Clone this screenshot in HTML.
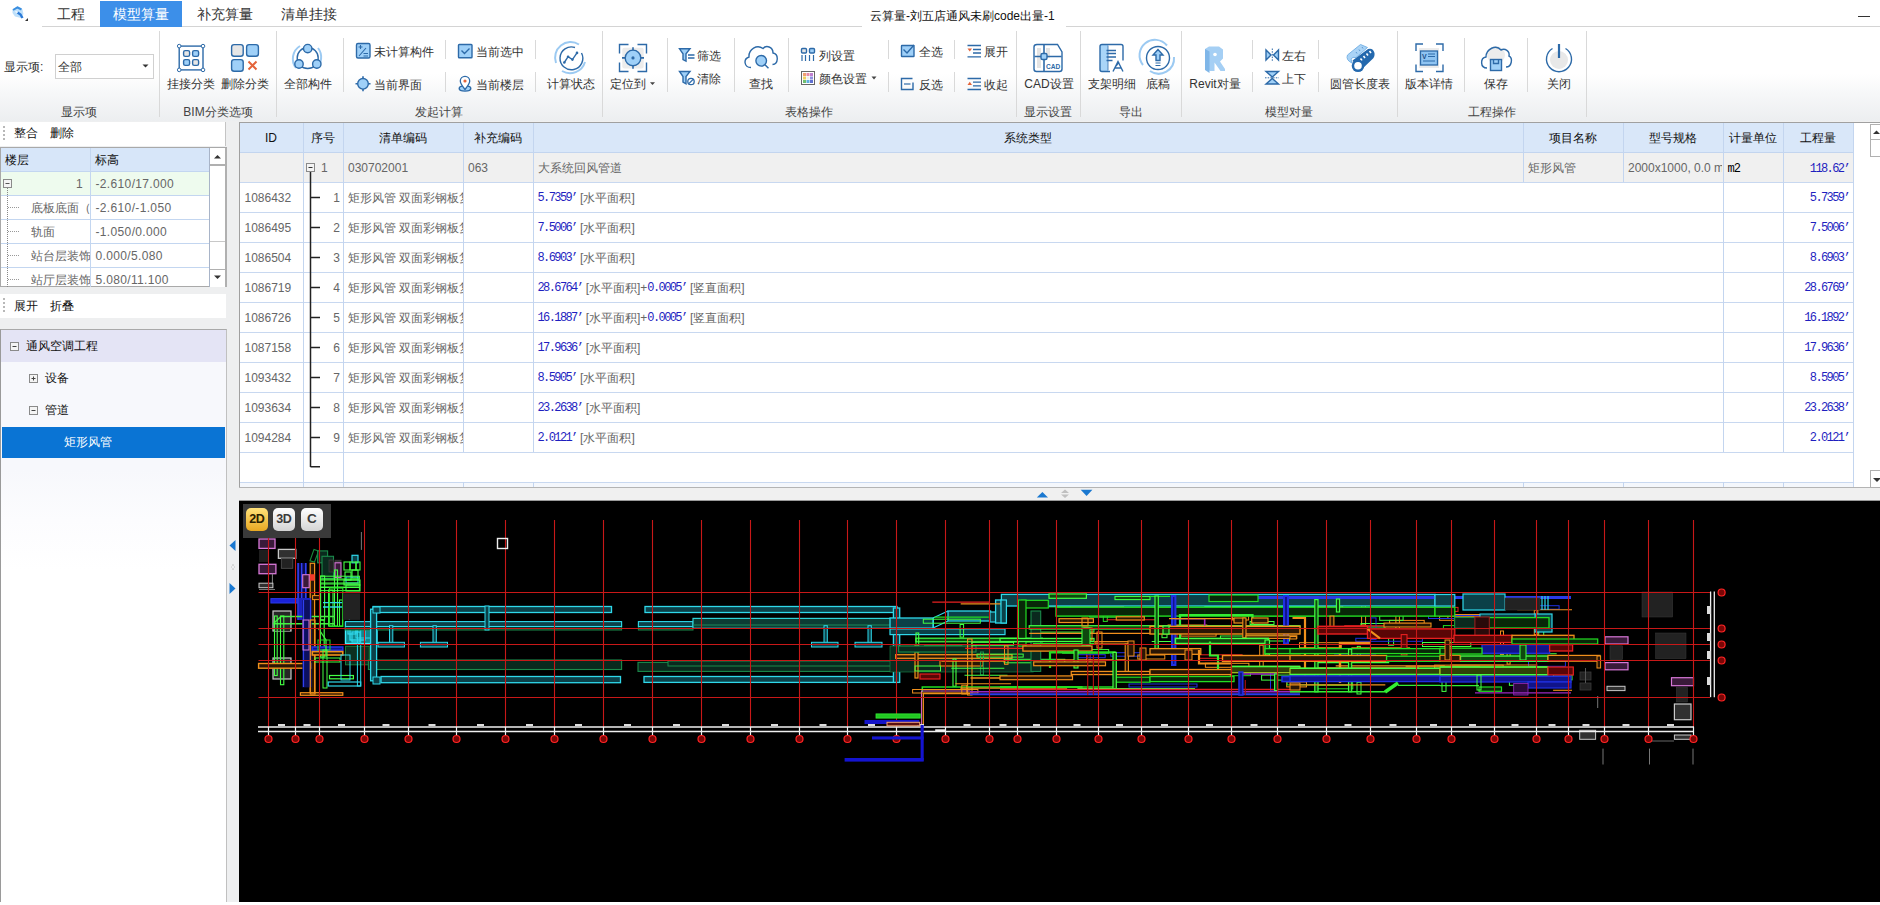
<!DOCTYPE html>
<html><head><meta charset="utf-8">
<style>
*{box-sizing:border-box}
html,body{margin:0;padding:0;width:1880px;height:905px;overflow:hidden;background:#f0f0f0;font-family:"Liberation Sans",sans-serif;color:#333}
.a{position:absolute}
.t{position:absolute;white-space:nowrap;line-height:1}
.sep{position:absolute;width:1px;background:#d9d9d9}
.lbl{font-size:12px;color:#444}
.btn{font-size:12px;color:#333}
</style></head><body>
<div class="a" style="left:0;top:0;width:1880px;height:27px;background:#fff"></div>
<div class="a" style="left:0;top:27px;width:1880px;height:94px;background:linear-gradient(#fff 0%,#fff 50%,#f6f7f8 72%,#eceef0 100%)"></div>
<div class="a" style="left:42px;top:26px;width:1838px;height:1px;background:#d4d4d4"></div>
<div class="a" style="left:100px;top:1px;width:82px;height:26px;background:#3c8fe9"></div>
<div class="t" style="left:57px;top:7px;font-size:14px;color:#333">工程</div>
<div class="t" style="left:113px;top:7px;font-size:14px;color:#fff">模型算量</div>
<div class="t" style="left:197px;top:7px;font-size:14px;color:#333">补充算量</div>
<div class="t" style="left:281px;top:7px;font-size:14px;color:#333">清单挂接</div>
<div class="a" style="left:862px;top:26px;width:204px;height:1px;background:#fff"></div>
<div class="t" style="left:870px;top:9.5px;font-size:12px;color:#111">云算量-刘五店通风未刷code出量-1</div>
<div class="a" style="left:1858px;top:16px;width:12px;height:1px;background:#333"></div>
<div class="a" style="left:55px;top:54px;width:99px;height:25px;background:#fff;border:1px solid #d0d0d0"></div>
<div class="t btn" style="left:58px;top:61px">全部</div>

<div class="sep" style="left:159px;top:31px;height:86px"></div>
<div class="sep" style="left:276px;top:31px;height:86px"></div>
<div class="sep" style="left:602px;top:31px;height:86px"></div>
<div class="sep" style="left:1016px;top:31px;height:86px"></div>
<div class="sep" style="left:1080px;top:31px;height:86px"></div>
<div class="sep" style="left:1181px;top:31px;height:86px"></div>
<div class="sep" style="left:1397px;top:31px;height:86px"></div>
<div class="sep" style="left:1586px;top:31px;height:86px"></div>
<div class="sep" style="left:343px;top:38px;height:54px"></div>
<div class="sep" style="left:667px;top:38px;height:54px"></div>
<div class="sep" style="left:734px;top:38px;height:54px"></div>
<div class="sep" style="left:788px;top:38px;height:54px"></div>
<div class="sep" style="left:1464px;top:38px;height:54px"></div>
<div class="sep" style="left:1527px;top:38px;height:54px"></div>
<div class="sep" style="left:445px;top:40px;height:19px"></div>
<div class="sep" style="left:445px;top:72px;height:20px"></div>
<div class="sep" style="left:535px;top:40px;height:19px"></div>
<div class="sep" style="left:535px;top:72px;height:20px"></div>
<div class="sep" style="left:888px;top:40px;height:19px"></div>
<div class="sep" style="left:888px;top:72px;height:20px"></div>
<div class="sep" style="left:954px;top:40px;height:19px"></div>
<div class="sep" style="left:954px;top:72px;height:20px"></div>
<div class="sep" style="left:1252px;top:40px;height:19px"></div>
<div class="sep" style="left:1252px;top:72px;height:20px"></div>
<div class="sep" style="left:1318px;top:40px;height:19px"></div>
<div class="sep" style="left:1318px;top:72px;height:20px"></div>
<div class="t lbl" style="left:19px;width:120px;text-align:center;top:106px;">显示项</div>
<div class="t lbl" style="left:158px;width:120px;text-align:center;top:106px;">BIM分类选项</div>
<div class="t lbl" style="left:379px;width:120px;text-align:center;top:106px;">发起计算</div>
<div class="t lbl" style="left:749px;width:120px;text-align:center;top:106px;">表格操作</div>
<div class="t lbl" style="left:988px;width:120px;text-align:center;top:106px;">显示设置</div>
<div class="t lbl" style="left:1071px;width:120px;text-align:center;top:106px;">导出</div>
<div class="t lbl" style="left:1229px;width:120px;text-align:center;top:106px;">模型对量</div>
<div class="t lbl" style="left:1432px;width:120px;text-align:center;top:106px;">工程操作</div>
<div class="t btn" style="left:130.5px;width:120px;text-align:center;top:78px;">挂接分类</div>
<div class="t btn" style="left:185px;width:120px;text-align:center;top:78px;">删除分类</div>
<div class="t btn" style="left:248px;width:120px;text-align:center;top:78px;">全部构件</div>
<div class="t btn" style="left:511px;width:120px;text-align:center;top:78px;">计算状态</div>
<div class="t btn" style="left:568px;width:120px;text-align:center;top:78px;">定位到</div>
<div class="t btn" style="left:700.5px;width:120px;text-align:center;top:78px;">查找</div>
<div class="t btn" style="left:989px;width:120px;text-align:center;top:78px;">CAD设置</div>
<div class="t btn" style="left:1052px;width:120px;text-align:center;top:78px;">支架明细</div>
<div class="t btn" style="left:1098px;width:120px;text-align:center;top:78px;">底稿</div>
<div class="t btn" style="left:1155px;width:120px;text-align:center;top:78px;">Revit对量</div>
<div class="t btn" style="left:1300px;width:120px;text-align:center;top:78px;">圆管长度表</div>
<div class="t btn" style="left:1369px;width:120px;text-align:center;top:78px;">版本详情</div>
<div class="t btn" style="left:1436px;width:120px;text-align:center;top:78px;">保存</div>
<div class="t btn" style="left:1499px;width:120px;text-align:center;top:78px;">关闭</div>
<div class="t btn" style="left:374px;top:46px;">未计算构件</div>
<div class="t btn" style="left:374px;top:79px;">当前界面</div>
<div class="t btn" style="left:476px;top:46px;">当前选中</div>
<div class="t btn" style="left:476px;top:79px;">当前楼层</div>
<div class="t btn" style="left:697px;top:50px;">筛选</div>
<div class="t btn" style="left:697px;top:73px;">清除</div>
<div class="t btn" style="left:819px;top:50px;">列设置</div>
<div class="t btn" style="left:819px;top:73px;">颜色设置</div>
<div class="t btn" style="left:919px;top:46px;">全选</div>
<div class="t btn" style="left:919px;top:79px;">反选</div>
<div class="t btn" style="left:984px;top:46px;">展开</div>
<div class="t btn" style="left:984px;top:79px;">收起</div>
<div class="t btn" style="left:1282px;top:50px;">左右</div>
<div class="t btn" style="left:1282px;top:73px;">上下</div>
<div class="t btn" style="left:4px;top:61px;">显示项: </div>
<svg class="a" style="left:0;top:0" width="1880" height="121" viewBox="0 0 1880 121">
<defs><style>.s{fill:none;stroke:#2d6aa8;stroke-width:1.4}.f{fill:#9fd0f8;stroke:#2d6aa8;stroke-width:1.4}.g{fill:#e6e6e6;stroke:#2d6aa8;stroke-width:1.4}.lb{fill:none;stroke:#9ccaf2;stroke-width:2}</style></defs>
<!-- 挂接分类 -->
<rect class="s" x="179.2" y="46.1" width="23.8" height="23.8"/>
<circle cx="179.2" cy="46.1" r="1.8" fill="#fff" stroke="#2d6aa8" stroke-width="1"/><circle cx="203" cy="46.1" r="1.8" fill="#fff" stroke="#2d6aa8" stroke-width="1"/><circle cx="179.2" cy="69.9" r="1.8" fill="#fff" stroke="#2d6aa8" stroke-width="1"/><circle cx="203" cy="69.9" r="1.8" fill="#fff" stroke="#2d6aa8" stroke-width="1"/>
<rect class="g" x="183.6" y="50.6" width="6" height="5.8" rx="1.6"/><rect class="f" x="192.6" y="50.6" width="6" height="5.8" rx="1.6"/><rect class="f" x="183.6" y="59.6" width="6" height="5.8" rx="1.6"/><rect class="g" x="192.6" y="59.6" width="6" height="5.8" rx="1.6"/>
<!-- 删除分类 -->
<rect class="g" x="231.6" y="44.6" width="11.6" height="11.6" rx="2.5"/><rect class="f" x="246.6" y="44.6" width="11.8" height="11.6" rx="2.5"/><rect class="f" x="231.6" y="59.6" width="11.6" height="11.6" rx="2.5"/>
<path d="M248.5 61.5 L256.5 69.5 M256.5 61.5 L248.5 69.5" stroke="#e4643a" stroke-width="2"/>
<!-- 全部构件 -->
<path class="lb" d="M296 68 A15 15 0 0 1 300 46 M318 48 A15 15 0 0 1 316 68.5" />
<circle class="s" cx="307.7" cy="58" r="10.5"/>
<circle class="f" cx="307.7" cy="48.6" r="4.2"/><circle class="f" cx="299" cy="64" r="4.2"/><circle class="f" cx="316.8" cy="64" r="4.2"/>
<!-- 未计算构件 small -->
<rect class="f" x="356.5" y="43.5" width="13.5" height="14.5" rx="1.5"/>
<path d="M358.5 47h4M360.5 45v4M359 56l7-8M363.5 53.5h4.5M363.5 56h4.5" stroke="#2d6aa8" stroke-width="1.1" fill="none"/>
<!-- 当前界面 -->
<circle class="f" cx="363" cy="83.8" r="5.3"/>
<path d="M363 76.3v2.3M363 89v2.3M355.5 83.8h2.3M368.2 83.8h2.3" stroke="#2d6aa8" stroke-width="1.6"/>
<!-- 当前选中 -->
<rect class="f" x="458.5" y="44.5" width="13.5" height="13.3" rx="0.8"/>
<path d="M461.5 50.5l3 3 5-5" class="s"/>
<!-- 当前楼层 -->
<ellipse class="f" cx="465" cy="88.5" rx="5.8" ry="2.6"/>
<path d="M465 89.5 C461 84.5 460.3 82.5 460.3 81 A4.7 4.7 0 0 1 469.7 81 C469.7 82.5 469 84.5 465 89.5Z" fill="#fff" stroke="#2d6aa8" stroke-width="1.3"/>
<circle cx="465" cy="81" r="1.6" fill="#e4643a"/>
<!-- 计算状态 -->
<path class="lb" d="M556 63 A15.6 15.6 0 0 1 579 44.5 M585 62 A15.6 15.6 0 0 1 562 71" stroke-width="2.2"/>
<path d="M575 47.5 A11.4 11.4 0 1 0 581.5 53" class="s" stroke-width="1.5"/>
<path d="M564.3 62.5 L568.1 56.7 L572.4 59.6 L577 52.9" class="s" stroke-width="1.4"/>
<circle cx="564.3" cy="62.5" r="1.3" fill="#2d6aa8"/><circle cx="568.1" cy="56.7" r="1.3" fill="#2d6aa8"/><circle cx="572.4" cy="59.6" r="1.3" fill="#2d6aa8"/><circle cx="577" cy="52.9" r="1.3" fill="#2d6aa8"/>
<!-- 定位到 -->
<rect x="622.3" y="47.8" width="21.4" height="20.7" fill="#ececec" rx="2"/>
<path d="M619.5 53.5v-9h9M637.5 44.5h9v9M646.5 62.5v9h-9M628.5 71.5h-9v-9" class="s" stroke-width="1.5"/>
<circle class="f" cx="633" cy="57.9" r="7.8" stroke-width="1.6"/>
<circle cx="633" cy="57.9" r="1.6" fill="#2d6aa8"/>
<path d="M633 47.2v3M633 65.8v3M622 57.9h3M641 57.9h3" stroke="#2d6aa8" stroke-width="1.6"/>
<!-- 筛选 -->
<path d="M679.5 48.8h10.5l-4 5v7.3l-3 -1.6v-5.7z" class="f" stroke-width="1.2"/>
<path d="M688 55h6.5M688 58h6.5" stroke="#2d6aa8" stroke-width="1.3"/>
<!-- 清除 -->
<path d="M679.5 71.5h10.5l-4 5v7.3l-3 -1.6v-5.7z" class="f" stroke-width="1.2"/>
<circle cx="691" cy="81.5" r="3.2" fill="#fff" stroke="#2d6aa8" stroke-width="1.3"/><path d="M689 83.5l4-4" stroke="#2d6aa8" stroke-width="1.1"/>
<!-- 查找 -->
<path d="M751 67.5 C744 67.5 743 59 749 57 C748.5 49 757 44 763 48.5 C766 45 773 46.5 773 53 C779 54 778.5 64 772.5 64.5" class="s" stroke-width="1.5"/>
<circle class="f" cx="761.2" cy="60.8" r="5.3" stroke-width="1.5"/>
<path d="M765 64.8l3.5 3.5" stroke="#2d6aa8" stroke-width="1.5"/>
<!-- 列设置 -->
<rect class="g" x="801.5" y="48.5" width="5" height="4.5" rx="1" stroke-width="1"/><rect class="f" x="809.5" y="48.5" width="5" height="4.5" rx="1" stroke-width="1"/>
<path d="M802 55v6M805.5 55v6M809.5 55v6M813.5 55v6" stroke="#2d6aa8" stroke-width="1.2"/>
<!-- 颜色设置 -->
<rect x="801.5" y="71.5" width="13" height="13" fill="#fff" stroke="#666" stroke-width="1"/>
<rect x="803" y="73" width="3" height="3" fill="#f1a070"/><rect x="806.5" y="73" width="3" height="3" fill="#e88aa8"/><rect x="810" y="73" width="3" height="3" fill="#c080d0"/>
<rect x="803" y="76.5" width="3" height="3" fill="#f0d060"/><rect x="806.5" y="76.5" width="3" height="3" fill="#eee"/><rect x="810" y="76.5" width="3" height="3" fill="#9090e0"/>
<rect x="803" y="80" width="3" height="3" fill="#70c070"/><rect x="806.5" y="80" width="3" height="3" fill="#60b0e0"/><rect x="810" y="80" width="3" height="3" fill="#6070d0"/>
<path d="M871.5 76.5h5l-2.5 3z" fill="#444"/>
<path d="M650 82.3h5l-2.5 2.8z" fill="#444"/>
<path d="M142.5 64.5h6l-3 3z" fill="#333"/>
<!-- 全选 -->
<rect class="f" x="901.5" y="45.5" width="12.5" height="11" rx="0.5" stroke-width="1.3" />
<path d="M903.5 49.5l3.5 3.5 7-8" class="s" stroke-width="1.4"/>
<!-- 反选 -->
<path d="M912.5 78.5h-11v11h11.5v-7" class="s" stroke-width="1.3"/><path d="M904 84h6.5" stroke="#2d6aa8" stroke-width="1.2"/>
<!-- 展开 -->
<path d="M967.5 45.5h13.5M973 49.5h8M973 53h8M967.5 56.8h13.5" stroke="#2d6aa8" stroke-width="1.3"/>
<path d="M967.5 48.5h4.5l-2.25 3z" fill="#e4643a"/>
<!-- 收起 -->
<path d="M967.5 78.5h13.5M973 82.2h8M973 85.8h8M967.5 89.5h13.5" stroke="#2d6aa8" stroke-width="1.3"/>
<path d="M967.5 85h4.5l-2.25 -3.2z" fill="#e4643a"/>
<!-- CAD -->
<rect x="1037" y="48" width="4" height="20" fill="#e4e4e4"/><rect x="1046" y="48" width="4" height="10" fill="#e4e4e4"/>
<path d="M1037 44.5h20.5l4.5 7.5v17q0 2.5 -2.5 2.5h-23q-2.5 0 -2.5 -2.5v-22q0 -2.5 3 -2.5z" class="s" stroke-width="1.6"/>
<path d="M1034.5 56.5h27M1044 44.5v27" stroke="#2d6aa8" stroke-width="1.6"/>
<rect class="f" x="1041" y="53.5" width="6" height="6" rx="1.5" stroke-width="1.4"/>
<text x="1046" y="68.5" font-family="Liberation Sans" font-weight="bold" font-size="6.6" fill="#2d6aa8">CAD</text>
<!-- 支架明细 -->
<path d="M1108 44.5h-6q-2 0 -2 2v23q0 2 2 2h6z" fill="#a9d5f8"/>
<path d="M1110 71.5h-8q-2 0 -2-2v-23q0-2 2-2h19q2 0 2 2v14" class="s" stroke-width="1.5"/>
<path d="M1108 45.5v25" stroke="#2d6aa8" stroke-width="0.8"/>
<path d="M1106.5 50.5h9.5M1106.5 53.5h9.5M1106.5 57h9.5M1106.5 60.5h6" stroke="#2d6aa8" stroke-width="1.3"/>
<path d="M1113 71.5l5-10l5 10M1114.5 68h7M1116 66l3-4" class="s" stroke-width="1.5"/>
<!-- 底稿 -->
<path class="lb" d="M1143 65 A15.4 15.4 0 0 1 1167 45.5 M1174 57 A15.4 15.4 0 0 1 1150 71" stroke-width="2"/>
<circle class="s" cx="1158" cy="58" r="11.5" stroke-width="1.5"/>
<path d="M1158 49.5l-5 5.5h3v5.5h4v-5.5h3z" class="f" stroke-width="1.3"/>
<path d="M1155.5 63h5M1155.5 65.5h5" stroke="#2d6aa8" stroke-width="1.2"/>
<!-- Revit -->
<path d="M1205 49l4-2.5h10l4 3v9l-3 3 5 7.5v2h-4.5l-6-8.5v8.5h-4.5l-5-3z" fill="#a5cff4"/>
<path d="M1205 49l4.5 2.5v21.5l-4.5-3z" fill="#7fb6e8"/>
<circle cx="1215" cy="54.5" r="1.8" fill="#fff"/>
<!-- 左右 -->
<path d="M1266 50v10l5-5z" class="f" stroke-width="1.2"/><path d="M1278.5 50v10l-5-5z" class="f" stroke-width="1.2"/>
<path d="M1272.3 48.5v13" stroke="#2d6aa8" stroke-width="1" stroke-dasharray="1.5 1.2"/>
<!-- 上下 -->
<path d="M1266 71.5h12.5l-6.25 5.5z" class="f" stroke-width="1.2"/><path d="M1266 84h12.5l-6.25 -5.5z" class="f" stroke-width="1.2"/>
<path d="M1265 77.8h14" stroke="#2d6aa8" stroke-width="1" stroke-dasharray="1.5 1.2"/>
<!-- 圆管长度表 -->
<path d="M1352 63 Q1345.5 60 1347.5 55 L1360.5 44.5 L1367.5 47.5 L1356 57.5 Q1352.5 56.5 1351 59z" fill="#a9d3f6" stroke="#7ab4e6" stroke-width="1"/>
<path d="M1352.5 60.5 L1368 49 Q1373 47.5 1374.5 53 Q1375 57 1372 59.5 L1361 70z" fill="#2469ae"/>
<path d="M1360.5 58.5l1.5 2M1363.5 56l1.5 2M1366.5 53.5l1.5 2M1369.5 51l1.5 2" stroke="#fff" stroke-width="1.6"/>
<path d="M1356 52l1 1.5M1359 49.5l1 1.5M1362 47l1 1.5" stroke="#5a96d0" stroke-width="1"/>
<circle cx="1358" cy="65.8" r="6.3" fill="#2469ae"/><circle cx="1358" cy="65.8" r="3.8" fill="#fff"/>
<!-- 版本详情 -->
<rect x="1419" y="48" width="20" height="20" fill="#ececec"/>
<path d="M1416 51v-7h7M1436 44h7v7M1443 64.5v7h-7M1423 71.5h-7v-7" class="s" stroke-width="1.5"/>
<rect x="1420.5" y="51" width="17" height="14" fill="#8fc4f2" stroke="#2d6aa8" stroke-width="1.3"/>
<text x="1422" y="58.5" font-family="Liberation Sans" font-size="7" font-weight="bold" fill="#1d4f8a">V</text>
<path d="M1428 54h7M1428 56.5h7M1423 61h12" stroke="#2d6aa8" stroke-width="1"/>
<!-- 保存 -->
<circle cx="1496" cy="55" r="9" fill="#ececec"/>
<path d="M1487 68 C1480 68 1480 58 1486 57 C1486 49 1496 44 1501 50 C1505 48 1510 51 1509 56 C1513 58 1512 67 1506 67" class="s" stroke-width="1.4"/>
<rect class="f" x="1490.5" y="59.5" width="11" height="11" stroke-width="1.3"/>
<path d="M1493.5 59.5v4h5v-4" class="s" stroke-width="1.2"/>
<!-- 关闭 -->
<circle cx="1559" cy="60" r="9" fill="#e8e8e8"/>
<path d="M1552.5 48.5 A12.5 12.5 0 1 0 1565.5 48.5" class="s" stroke-width="2.2"/>
<path d="M1559 44v14" stroke="#2d6aa8" stroke-width="2.2"/>
<!-- logo -->
<path d="M12.5 9.5L17.5 6L22.5 9.5L23.5 14L21 18L15 16.5L12.5 13z" fill="#bfe0fa"/>
<path d="M13 10L17.5 7.5L21.5 9.5" stroke="#3a8ee0" stroke-width="2" fill="none"/>
<path d="M17.5 12.5L20.5 14.5L22.5 18" stroke="#2a7ad8" stroke-width="2.4" fill="none"/>
<path d="M15.5 11.5l2 1" stroke="#fff" stroke-width="1.2"/>
<path d="M25 21h3v-3z" fill="#333"/>
</svg>

<!-- left panel -->
<div class="a" style="left:0;top:121px;width:240px;height:784px;background:#eeeff0"></div>
<div class="a" style="left:0;top:121.5px;width:226px;height:24.5px;background:#fff;border-right:1px solid #c4c4c4"></div>
<div class="a" style="left:3px;top:126px;width:2px;height:14px;background:repeating-linear-gradient(#b8b8b8 0 2px,transparent 2px 4px)"></div>
<div class="t" style="left:14px;top:127px;font-size:12px;color:#111">整合</div>
<div class="t" style="left:50px;top:127px;font-size:12px;color:#111">删除</div>
<!-- floor table -->
<div class="a" style="left:0;top:147px;width:227px;height:140px;background:#fff;border:1px solid #a9a9a9"></div>
<div class="a" style="left:1px;top:148px;width:208px;height:23.5px;background:#d7e6f9;border-bottom:1px solid #c3d6f0"></div>
<div class="a" style="left:90px;top:148px;width:1px;height:139px;background:#c3d6f0"></div>
<div class="t" style="left:5px;top:153.5px;font-size:12px;color:#111">楼层</div>
<div class="t" style="left:95px;top:153.5px;font-size:12px;color:#111">标高</div>
<div class="a" style="left:1px;top:172px;width:208px;height:23.5px;background:#eefbee;border-bottom:1px solid #c3d6f0"></div>
<div class="a" style="left:1px;top:219px;width:208px;height:1px;background:#c3d6f0"></div>
<div class="a" style="left:1px;top:243px;width:208px;height:1px;background:#c3d6f0"></div>
<div class="a" style="left:1px;top:267px;width:208px;height:1px;background:#c3d6f0"></div>
<div class="a" style="left:90px;top:148px;width:1px;height:139px;background:#c3d6f0"></div>
<!-- scrollbar -->
<div class="a" style="left:209px;top:148px;width:1px;height:139px;background:#a8b4c8"></div>
<div class="a" style="left:210px;top:148px;width:16px;height:139px;background:#fff"></div>
<div class="a" style="left:210px;top:164px;width:16px;height:2px;background:#b0b0b0"></div>
<div class="a" style="left:210px;top:241px;width:16px;height:1px;background:#c8c8c8"></div>
<div class="a" style="left:210px;top:269px;width:16px;height:1px;background:#b0b0b0"></div>
<div class="a" style="left:225px;top:148px;width:2px;height:139px;background:#b0b0b0"></div>
<svg class="a" style="left:0;top:140px" width="240" height="160">
<path d="M214 18.5h7l-3.5-3.5z" fill="#333"/>
<path d="M214 135.5h7l-3.5 3.5z" fill="#333"/>
<rect x="3.5" y="39.5" width="8" height="8" fill="#f4f4f4" stroke="#8a8a8a" stroke-width="1"/>
<path d="M5.5 43.5h4" stroke="#555" stroke-width="1"/>
<path d="M7.5 48v99" stroke="#888" stroke-width="1" stroke-dasharray="1 1"/>
<path d="M8 67.5h11M8 91.5h11M8 115.5h11M8 139.5h11" stroke="#999" stroke-width="1" stroke-dasharray="1 1"/>
</svg>
<div class="t" style="left:76px;top:177.5px;font-size:12px;color:#666">1</div>
<div class="t" style="left:95.5px;top:177.5px;font-size:12px;color:#666;letter-spacing:0.35px">-2.610/17.000</div>
<div class="a" style="left:31px;top:196px;width:59px;height:90px;overflow:hidden">
<div class="t" style="left:0;top:5.5px;font-size:12px;color:#666">底板底面（底板）</div>
<div class="t" style="left:0;top:29.5px;font-size:12px;color:#666">轨面</div>
<div class="t" style="left:0;top:53.5px;font-size:12px;color:#666">站台层装饰面</div>
<div class="t" style="left:0;top:77.5px;font-size:12px;color:#666">站厅层装饰面</div>
</div>
<div class="t" style="left:95.5px;top:201.5px;font-size:12px;color:#666;letter-spacing:0.35px">-2.610/-1.050</div>
<div class="t" style="left:95.5px;top:225.5px;font-size:12px;color:#666;letter-spacing:0.35px">-1.050/0.000</div>
<div class="t" style="left:95.5px;top:249.5px;font-size:12px;color:#666;letter-spacing:0.35px">0.000/5.080</div>
<div class="t" style="left:95.5px;top:273.5px;font-size:12px;color:#666;letter-spacing:0.35px">5.080/11.100</div>
<!-- toolbar 2 -->
<div class="a" style="left:0;top:293.5px;width:226px;height:24px;background:#fff"></div>
<div class="a" style="left:3px;top:298px;width:2px;height:14px;background:repeating-linear-gradient(#b8b8b8 0 2px,transparent 2px 4px)"></div>
<div class="t" style="left:14px;top:299.5px;font-size:12px;color:#111">展开</div>
<div class="t" style="left:50px;top:299.5px;font-size:12px;color:#111">折叠</div>
<!-- tree -->
<div class="a" style="left:0;top:328.5px;width:227px;height:577px;background:linear-gradient(#f7f8fc 0px,#f7f8fc 140px,#fcfcfe 190px,#fff 240px);border-left:1px solid #9a9a9a;border-top:1px solid #a9a9a9;border-right:1px solid #c0c0c0"></div>
<div class="a" style="left:1px;top:329.5px;width:224.5px;height:32.5px;background:#e4e4f5"></div>
<div class="a" style="left:2px;top:427px;width:223px;height:30.5px;background:#0a74d4"></div>
<svg class="a" style="left:0;top:330px" width="60" height="100">
<rect x="10.5" y="12.5" width="8" height="8" fill="#f4f4f4" stroke="#8a8a8a"/><path d="M12.5 16.5h4" stroke="#444"/>
<rect x="29.5" y="44.5" width="8" height="8" fill="#f4f4f4" stroke="#8a8a8a"/><path d="M31.5 48.5h4M33.5 46.5v4" stroke="#444"/>
<rect x="29.5" y="76.5" width="8" height="8" fill="#f4f4f4" stroke="#8a8a8a"/><path d="M31.5 80.5h4" stroke="#444"/>
</svg>
<div class="t" style="left:26px;top:340px;font-size:12px;color:#111">通风空调工程</div>
<div class="t" style="left:45px;top:372px;font-size:12px;color:#111">设备</div>
<div class="t" style="left:45px;top:404px;font-size:12px;color:#111">管道</div>
<div class="t" style="left:64px;top:436px;font-size:12px;color:#fff">矩形风管</div>
<!-- vertical splitter arrows -->
<svg class="a" style="left:226px;top:530px" width="14" height="70">
<path d="M3.5 15.5l6-5.5v11z" fill="#1a78d0"/>
<path d="M5 37l3-3v6z M9 37l-3-3v6z" fill="#c0c0c0"/>
<path d="M3.5 53v11l6-5.5z" fill="#1a78d0"/>
</svg>

<div class="a" style="left:239px;top:122px;width:1641px;height:366px;background:#fff"></div>
<div class="a" style="left:239px;top:122px;width:1641px;height:1px;background:#a0a0a0"></div>
<div class="a" style="left:239px;top:122px;width:1px;height:366px;background:#a0a0a0"></div>
<div class="a" style="left:240px;top:123px;width:1614px;height:29.5px;background:#d9e7f9"></div>
<div class="a" style="left:240px;top:152px;width:1614px;height:1px;background:#c3d5ef"></div>
<div class="a" style="left:240px;top:153px;width:1614px;height:29px;background:#f0f0f0"></div>
<div class="a" style="left:240px;top:182px;width:1614px;height:1px;background:#c8d8f0"></div>
<div class="a" style="left:240px;top:212px;width:1614px;height:1px;background:#c8d8f0"></div>
<div class="a" style="left:240px;top:242px;width:1614px;height:1px;background:#c8d8f0"></div>
<div class="a" style="left:240px;top:272px;width:1614px;height:1px;background:#c8d8f0"></div>
<div class="a" style="left:240px;top:302px;width:1614px;height:1px;background:#c8d8f0"></div>
<div class="a" style="left:240px;top:332px;width:1614px;height:1px;background:#c8d8f0"></div>
<div class="a" style="left:240px;top:362px;width:1614px;height:1px;background:#c8d8f0"></div>
<div class="a" style="left:240px;top:392px;width:1614px;height:1px;background:#c8d8f0"></div>
<div class="a" style="left:240px;top:422px;width:1614px;height:1px;background:#c8d8f0"></div>
<div class="a" style="left:240px;top:452px;width:1614px;height:1px;background:#c8d8f0"></div>
<div class="a" style="left:240px;top:482px;width:1614px;height:1px;background:#c8d8f0"></div>
<div class="a" style="left:240px;top:483px;width:1614px;height:4px;background:#f4f7fc"></div>
<div class="a" style="left:239px;top:487px;width:1641px;height:1px;background:#b4b4b4"></div>
<div class="a" style="left:1853px;top:123px;width:1px;height:364px;background:#c3d5ef"></div>
<div class="a" style="left:303px;top:123px;width:1px;height:364px;background:#c3d5ef"></div>
<div class="a" style="left:343px;top:123px;width:1px;height:364px;background:#c3d5ef"></div>
<div class="a" style="left:463px;top:123px;width:1px;height:329px;background:#c3d5ef"></div>
<div class="a" style="left:463px;top:482px;width:1px;height:5px;background:#c3d5ef"></div>
<div class="a" style="left:533px;top:123px;width:1px;height:329px;background:#c3d5ef"></div>
<div class="a" style="left:533px;top:482px;width:1px;height:5px;background:#c3d5ef"></div>
<div class="a" style="left:1523px;top:123px;width:1px;height:59px;background:#c3d5ef"></div>
<div class="a" style="left:1523px;top:482px;width:1px;height:5px;background:#c3d5ef"></div>
<div class="a" style="left:1623px;top:123px;width:1px;height:59px;background:#c3d5ef"></div>
<div class="a" style="left:1623px;top:482px;width:1px;height:5px;background:#c3d5ef"></div>
<div class="a" style="left:1723px;top:123px;width:1px;height:329px;background:#c3d5ef"></div>
<div class="a" style="left:1723px;top:482px;width:1px;height:5px;background:#c3d5ef"></div>
<div class="a" style="left:1783px;top:123px;width:1px;height:329px;background:#c3d5ef"></div>
<div class="a" style="left:1783px;top:482px;width:1px;height:5px;background:#c3d5ef"></div>
<div class="t" style="left:221px;width:100px;text-align:center;top:131.5px;font-size:12px;color:#111">ID</div>
<div class="t" style="left:273px;width:100px;text-align:center;top:131.5px;font-size:12px;color:#111">序号</div>
<div class="t" style="left:353px;width:100px;text-align:center;top:131.5px;font-size:12px;color:#111">清单编码</div>
<div class="t" style="left:448px;width:100px;text-align:center;top:131.5px;font-size:12px;color:#111">补充编码</div>
<div class="t" style="left:978px;width:100px;text-align:center;top:131.5px;font-size:12px;color:#111">系统类型</div>
<div class="t" style="left:1523px;width:100px;text-align:center;top:131.5px;font-size:12px;color:#111">项目名称</div>
<div class="t" style="left:1623px;width:100px;text-align:center;top:131.5px;font-size:12px;color:#111">型号规格</div>
<div class="t" style="left:1703px;width:100px;text-align:center;top:131.5px;font-size:12px;color:#111">计量单位</div>
<div class="t" style="left:1768px;width:100px;text-align:center;top:131.5px;font-size:12px;color:#111">工程量</div>
<svg class="a" style="left:300px;top:160px" width="20" height="310"><rect x="6.5" y="3.5" width="8" height="8" fill="#f4f4f4" stroke="#8a8a8a"/><path d="M8.5 7.5h4" stroke="#333"/><path d="M10.5 12v295" stroke="#222" stroke-width="1.5"/><path d="M10.5 37.5h13" stroke="#222" stroke-width="1.5"/><path d="M10.5 67.5h13" stroke="#222" stroke-width="1.5"/><path d="M10.5 97.5h13" stroke="#222" stroke-width="1.5"/><path d="M10.5 127.5h13" stroke="#222" stroke-width="1.5"/><path d="M10.5 157.5h13" stroke="#222" stroke-width="1.5"/><path d="M10.5 187.5h13" stroke="#222" stroke-width="1.5"/><path d="M10.5 217.5h13" stroke="#222" stroke-width="1.5"/><path d="M10.5 247.5h13" stroke="#222" stroke-width="1.5"/><path d="M10.5 277.5h13" stroke="#222" stroke-width="1.5"/><path d="M10.5 306.75h12.5" stroke="#222" stroke-width="1.5"/></svg>
<div class="t" style="left:321px;top:161.5px;font-size:12px;color:#666;line-height:12px;vertical-align:top">1</div>
<div class="t" style="left:348px;top:161.5px;font-size:12px;color:#666;line-height:12px;vertical-align:top">030702001</div>
<div class="t" style="left:468px;top:161.5px;font-size:12px;color:#666;line-height:12px;vertical-align:top">063</div>
<div class="t" style="left:537.5px;top:161.5px;font-size:12px;color:#666;line-height:12px;vertical-align:top">大系统回风管道</div>
<div class="t" style="left:1527.5px;top:161.5px;font-size:12px;color:#666;line-height:12px;vertical-align:top">矩形风管</div>
<div class="a" style="left:1624px;top:153px;width:98px;height:29px;overflow:hidden"><div class="t" style="left:4px;top:8.5px;font-size:12px;color:#666;line-height:12px;vertical-align:top">2000x1000, 0.0 mm</div></div>
<div class="t" style="left:1727.5px;top:162.5px;font-family:'Liberation Mono',monospace;font-size:12px;color:#000;letter-spacing:-1px;line-height:12px">m2</div>
<div class="t" style="left:1700px;width:149px;text-align:right;top:162.5px;font-family:'Liberation Mono',monospace;font-size:12px;letter-spacing:-1.6px;line-height:12px;vertical-align:top;color:#1f1fbf">118.62’</div>
<div class="t" style="left:244.5px;top:191.5px;font-size:12px;color:#666;line-height:12px;vertical-align:top">1086432</div>
<div class="t" style="left:300px;width:40px;text-align:right;top:191.5px;font-size:12px;color:#666;line-height:12px;vertical-align:top">1</div>
<div class="a" style="left:344px;top:182.5px;width:119px;height:29px;overflow:hidden"><div class="t" style="left:3.5px;top:9px;font-size:12px;color:#666;line-height:12px;vertical-align:top">矩形风管 双面彩钢板复合风管</div></div>
<div class="t" style="left:537.5px;top:191.5px;line-height:12px"><span style="font-family:'Liberation Mono',monospace;font-size:12px;letter-spacing:-1.6px;line-height:12px;vertical-align:top;color:#1f1fbf">5.7359’</span><span style="font-size:12px;color:#666;line-height:12px;vertical-align:top"> [水平面积]</span></div>
<div class="t" style="left:1700px;width:149px;text-align:right;top:191.5px;font-family:'Liberation Mono',monospace;font-size:12px;letter-spacing:-1.6px;line-height:12px;vertical-align:top;color:#1f1fbf">5.7359’</div>
<div class="t" style="left:244.5px;top:221.5px;font-size:12px;color:#666;line-height:12px;vertical-align:top">1086495</div>
<div class="t" style="left:300px;width:40px;text-align:right;top:221.5px;font-size:12px;color:#666;line-height:12px;vertical-align:top">2</div>
<div class="a" style="left:344px;top:212.5px;width:119px;height:29px;overflow:hidden"><div class="t" style="left:3.5px;top:9px;font-size:12px;color:#666;line-height:12px;vertical-align:top">矩形风管 双面彩钢板复合风管</div></div>
<div class="t" style="left:537.5px;top:221.5px;line-height:12px"><span style="font-family:'Liberation Mono',monospace;font-size:12px;letter-spacing:-1.6px;line-height:12px;vertical-align:top;color:#1f1fbf">7.5006’</span><span style="font-size:12px;color:#666;line-height:12px;vertical-align:top"> [水平面积]</span></div>
<div class="t" style="left:1700px;width:149px;text-align:right;top:221.5px;font-family:'Liberation Mono',monospace;font-size:12px;letter-spacing:-1.6px;line-height:12px;vertical-align:top;color:#1f1fbf">7.5006’</div>
<div class="t" style="left:244.5px;top:251.5px;font-size:12px;color:#666;line-height:12px;vertical-align:top">1086504</div>
<div class="t" style="left:300px;width:40px;text-align:right;top:251.5px;font-size:12px;color:#666;line-height:12px;vertical-align:top">3</div>
<div class="a" style="left:344px;top:242.5px;width:119px;height:29px;overflow:hidden"><div class="t" style="left:3.5px;top:9px;font-size:12px;color:#666;line-height:12px;vertical-align:top">矩形风管 双面彩钢板复合风管</div></div>
<div class="t" style="left:537.5px;top:251.5px;line-height:12px"><span style="font-family:'Liberation Mono',monospace;font-size:12px;letter-spacing:-1.6px;line-height:12px;vertical-align:top;color:#1f1fbf">8.6903’</span><span style="font-size:12px;color:#666;line-height:12px;vertical-align:top"> [水平面积]</span></div>
<div class="t" style="left:1700px;width:149px;text-align:right;top:251.5px;font-family:'Liberation Mono',monospace;font-size:12px;letter-spacing:-1.6px;line-height:12px;vertical-align:top;color:#1f1fbf">8.6903’</div>
<div class="t" style="left:244.5px;top:281.5px;font-size:12px;color:#666;line-height:12px;vertical-align:top">1086719</div>
<div class="t" style="left:300px;width:40px;text-align:right;top:281.5px;font-size:12px;color:#666;line-height:12px;vertical-align:top">4</div>
<div class="a" style="left:344px;top:272.5px;width:119px;height:29px;overflow:hidden"><div class="t" style="left:3.5px;top:9px;font-size:12px;color:#666;line-height:12px;vertical-align:top">矩形风管 双面彩钢板复合风管</div></div>
<div class="t" style="left:537.5px;top:281.5px;line-height:12px"><span style="font-family:'Liberation Mono',monospace;font-size:12px;letter-spacing:-1.6px;line-height:12px;vertical-align:top;color:#1f1fbf">28.6764’</span><span style="font-size:12px;color:#666;line-height:12px;vertical-align:top"> [水平面积]</span><span style="font-size:12px;color:#666;line-height:12px;vertical-align:top">+</span><span style="font-family:'Liberation Mono',monospace;font-size:12px;letter-spacing:-1.6px;line-height:12px;vertical-align:top;color:#1f1fbf">0.0005’</span><span style="font-size:12px;color:#666;line-height:12px;vertical-align:top"> [竖直面积]</span></div>
<div class="t" style="left:1700px;width:149px;text-align:right;top:281.5px;font-family:'Liberation Mono',monospace;font-size:12px;letter-spacing:-1.6px;line-height:12px;vertical-align:top;color:#1f1fbf">28.6769’</div>
<div class="t" style="left:244.5px;top:311.5px;font-size:12px;color:#666;line-height:12px;vertical-align:top">1086726</div>
<div class="t" style="left:300px;width:40px;text-align:right;top:311.5px;font-size:12px;color:#666;line-height:12px;vertical-align:top">5</div>
<div class="a" style="left:344px;top:302.5px;width:119px;height:29px;overflow:hidden"><div class="t" style="left:3.5px;top:9px;font-size:12px;color:#666;line-height:12px;vertical-align:top">矩形风管 双面彩钢板复合风管</div></div>
<div class="t" style="left:537.5px;top:311.5px;line-height:12px"><span style="font-family:'Liberation Mono',monospace;font-size:12px;letter-spacing:-1.6px;line-height:12px;vertical-align:top;color:#1f1fbf">16.1887’</span><span style="font-size:12px;color:#666;line-height:12px;vertical-align:top"> [水平面积]</span><span style="font-size:12px;color:#666;line-height:12px;vertical-align:top">+</span><span style="font-family:'Liberation Mono',monospace;font-size:12px;letter-spacing:-1.6px;line-height:12px;vertical-align:top;color:#1f1fbf">0.0005’</span><span style="font-size:12px;color:#666;line-height:12px;vertical-align:top"> [竖直面积]</span></div>
<div class="t" style="left:1700px;width:149px;text-align:right;top:311.5px;font-family:'Liberation Mono',monospace;font-size:12px;letter-spacing:-1.6px;line-height:12px;vertical-align:top;color:#1f1fbf">16.1892’</div>
<div class="t" style="left:244.5px;top:341.5px;font-size:12px;color:#666;line-height:12px;vertical-align:top">1087158</div>
<div class="t" style="left:300px;width:40px;text-align:right;top:341.5px;font-size:12px;color:#666;line-height:12px;vertical-align:top">6</div>
<div class="a" style="left:344px;top:332.5px;width:119px;height:29px;overflow:hidden"><div class="t" style="left:3.5px;top:9px;font-size:12px;color:#666;line-height:12px;vertical-align:top">矩形风管 双面彩钢板复合风管</div></div>
<div class="t" style="left:537.5px;top:341.5px;line-height:12px"><span style="font-family:'Liberation Mono',monospace;font-size:12px;letter-spacing:-1.6px;line-height:12px;vertical-align:top;color:#1f1fbf">17.9636’</span><span style="font-size:12px;color:#666;line-height:12px;vertical-align:top"> [水平面积]</span></div>
<div class="t" style="left:1700px;width:149px;text-align:right;top:341.5px;font-family:'Liberation Mono',monospace;font-size:12px;letter-spacing:-1.6px;line-height:12px;vertical-align:top;color:#1f1fbf">17.9636’</div>
<div class="t" style="left:244.5px;top:371.5px;font-size:12px;color:#666;line-height:12px;vertical-align:top">1093432</div>
<div class="t" style="left:300px;width:40px;text-align:right;top:371.5px;font-size:12px;color:#666;line-height:12px;vertical-align:top">7</div>
<div class="a" style="left:344px;top:362.5px;width:119px;height:29px;overflow:hidden"><div class="t" style="left:3.5px;top:9px;font-size:12px;color:#666;line-height:12px;vertical-align:top">矩形风管 双面彩钢板复合风管</div></div>
<div class="t" style="left:537.5px;top:371.5px;line-height:12px"><span style="font-family:'Liberation Mono',monospace;font-size:12px;letter-spacing:-1.6px;line-height:12px;vertical-align:top;color:#1f1fbf">8.5905’</span><span style="font-size:12px;color:#666;line-height:12px;vertical-align:top"> [水平面积]</span></div>
<div class="t" style="left:1700px;width:149px;text-align:right;top:371.5px;font-family:'Liberation Mono',monospace;font-size:12px;letter-spacing:-1.6px;line-height:12px;vertical-align:top;color:#1f1fbf">8.5905’</div>
<div class="t" style="left:244.5px;top:401.5px;font-size:12px;color:#666;line-height:12px;vertical-align:top">1093634</div>
<div class="t" style="left:300px;width:40px;text-align:right;top:401.5px;font-size:12px;color:#666;line-height:12px;vertical-align:top">8</div>
<div class="a" style="left:344px;top:392.5px;width:119px;height:29px;overflow:hidden"><div class="t" style="left:3.5px;top:9px;font-size:12px;color:#666;line-height:12px;vertical-align:top">矩形风管 双面彩钢板复合风管</div></div>
<div class="t" style="left:537.5px;top:401.5px;line-height:12px"><span style="font-family:'Liberation Mono',monospace;font-size:12px;letter-spacing:-1.6px;line-height:12px;vertical-align:top;color:#1f1fbf">23.2638’</span><span style="font-size:12px;color:#666;line-height:12px;vertical-align:top"> [水平面积]</span></div>
<div class="t" style="left:1700px;width:149px;text-align:right;top:401.5px;font-family:'Liberation Mono',monospace;font-size:12px;letter-spacing:-1.6px;line-height:12px;vertical-align:top;color:#1f1fbf">23.2638’</div>
<div class="t" style="left:244.5px;top:431.5px;font-size:12px;color:#666;line-height:12px;vertical-align:top">1094284</div>
<div class="t" style="left:300px;width:40px;text-align:right;top:431.5px;font-size:12px;color:#666;line-height:12px;vertical-align:top">9</div>
<div class="a" style="left:344px;top:422.5px;width:119px;height:29px;overflow:hidden"><div class="t" style="left:3.5px;top:9px;font-size:12px;color:#666;line-height:12px;vertical-align:top">矩形风管 双面彩钢板复合风管</div></div>
<div class="t" style="left:537.5px;top:431.5px;line-height:12px"><span style="font-family:'Liberation Mono',monospace;font-size:12px;letter-spacing:-1.6px;line-height:12px;vertical-align:top;color:#1f1fbf">2.0121’</span><span style="font-size:12px;color:#666;line-height:12px;vertical-align:top"> [水平面积]</span></div>
<div class="t" style="left:1700px;width:149px;text-align:right;top:431.5px;font-family:'Liberation Mono',monospace;font-size:12px;letter-spacing:-1.6px;line-height:12px;vertical-align:top;color:#1f1fbf">2.0121’</div>
<div class="a" style="left:1870px;top:123.5px;width:12px;height:33px;background:#fff;border:1px solid #b0b0b0"></div>
<div class="a" style="left:1870px;top:139px;width:12px;height:1px;background:#b0b0b0"></div>
<svg class="a" style="left:1870px;top:123px" width="10" height="365"><path d="M3 11h7v-0l-3.5-3.5z" fill="#333"/><path d="M3 357h7l-3.5 3.5z" fill="#333"/></svg>
<div class="a" style="left:1870px;top:470px;width:12px;height:17.5px;background:#fff;border:1px solid #b0b0b0"></div>
<svg class="a" style="left:1870px;top:470px" width="10" height="18"><path d="M3 8h8l-4 4z" fill="#333"/></svg>
<svg class="a" style="left:1030px;top:487px" width="70" height="13"><path d="M6.8 10.5h11.2l-5.6-5.5z" fill="#1a78d0"/><path d="M31 6l4-3.5 4 3.5z M31 7.5l4 3.5 4-3.5z" fill="#c0c0c0"/><path d="M50.7 2.7h11.7l-5.85 6.2z" fill="#1a78d0"/></svg>
<svg class="a" style="left:239px;top:500px" width="1641" height="405" viewBox="239 500 1641 405"><rect x="239" y="500" width="1641" height="405" fill="#000"/><rect x="259" y="550" width="9" height="12" fill="#1e1e1e"/>
<rect x="259" y="539" width="16" height="9.4" fill="#3a1a3a" stroke="#d878d8" stroke-width="1.3"/>
<rect x="278.4" y="549.4" width="17.4" height="8.9" fill="#303030" stroke="#c8c8c8" stroke-width="1.3"/>
<rect x="281.3" y="558.3" width="11.5" height="10" fill="#222" stroke="#555" stroke-width="0.8"/>
<rect x="259" y="564.3" width="16.9" height="9.4" fill="#3a1a3a" stroke="#d878d8" stroke-width="1.3"/>
<path d="M272.4 573.7L272.4 588" stroke="#888" stroke-width="1" fill="none"/>
<rect x="259" y="583.2" width="13.9" height="4.5" fill="#303030" stroke="#c8c8c8" stroke-width="1"/>
<path d="M259 589.5L275 589.5" stroke="#777" stroke-width="1" fill="none"/>
<path d="M298.2 563v57M301.7 563v57M305.7 563v40" stroke="#2a3ae8" stroke-width="1.5"/>
<rect x="298.2" y="563" width="7.5" height="57" fill="#0a0a50"/>
<path d="M298.2 563v57M301.7 563v57M305.7 563v40" stroke="#3040f0" stroke-width="1.4"/>
<rect x="310.2" y="563.3" width="4.4" height="131.7" fill="#2a1604" stroke="#f0901c" stroke-width="1.2"/>
<rect x="308.7" y="574.2" width="6" height="6.5" fill="#f03a2a"/>
<rect x="302.7" y="574.7" width="6.5" height="13.0" fill="#3a1a3a" stroke="#d878d8" stroke-width="1.1"/>
<path d="M310 560.8L314 549.4L318.6 551L314.5 562Z" stroke="#1a8a3a" stroke-width="1.1" fill="none"/>
<rect x="317.6" y="550.9" width="10.0" height="11.9" fill="#0a2a1e" stroke="#1a8a4a" stroke-width="1.1"/>
<rect x="322" y="556.3" width="11.5" height="22.4" fill="#0a2a1e" stroke="#1a8a4a" stroke-width="1.1"/>
<rect x="329" y="560" width="4.5" height="12" fill="#222222" stroke="#3a3a3a" stroke-width="0.8"/>
<rect x="334.5" y="559.8" width="7" height="3" fill="#333"/>
<rect x="335" y="562.8" width="6" height="14.9" fill="#3a1a3a" stroke="#d878d8" stroke-width="1.1"/>
<rect x="352" y="555.3" width="6" height="7.5" fill="#0b4048" stroke="#2fd8ea" stroke-width="1.2"/>
<rect x="344" y="562" width="6" height="8" fill="none" stroke="#44ff44" stroke-width="1.1"/>
<rect x="350" y="562" width="6" height="8" fill="none" stroke="#44ff44" stroke-width="1.1"/>
<rect x="356" y="562" width="4" height="8" fill="none" stroke="#44ff44" stroke-width="1.1"/>
<rect x="345" y="572" width="6" height="8" fill="none" stroke="#44ff44" stroke-width="1.1"/>
<rect x="352" y="570" width="6" height="8" fill="none" stroke="#44ff44" stroke-width="1.1"/>
<rect x="344" y="580" width="16" height="5" fill="none" stroke="#44ff44" stroke-width="1.1"/>
<rect x="346" y="585" width="14" height="6" fill="none" stroke="#44ff44" stroke-width="1.1"/>
<rect x="346" y="577" width="12" height="6" fill="none" stroke="#2fd8ea" stroke-width="1"/>
<rect x="320" y="576.2" width="39.4" height="2.8" fill="none" stroke="#44ff44" stroke-width="1"/>
<rect x="320" y="580" width="39.4" height="3" fill="none" stroke="#44ff44" stroke-width="1"/>
<rect x="320" y="584" width="39.4" height="3" fill="none" stroke="#44ff44" stroke-width="1"/>
<rect x="320" y="587.5" width="39.4" height="3.1" fill="none" stroke="#44ff44" stroke-width="1"/>
<rect x="320.6" y="576" width="4.0" height="44" fill="none" stroke="#44ff44" stroke-width="1.1"/>
<rect x="328.6" y="590" width="4.4" height="36" fill="none" stroke="#44ff44" stroke-width="1.1"/>
<rect x="334.5" y="570" width="3.0" height="56" fill="none" stroke="#44ff44" stroke-width="1.1"/>
<rect x="339.5" y="600" width="3.0" height="26" fill="none" stroke="#44ff44" stroke-width="1.1"/>
<rect x="342.5" y="593.6" width="17.5" height="26" fill="#222"/>
<path d="M323 602.6H349.4V620M323 607H348.4" stroke="#2fd8ea" stroke-width="1.3" fill="none"/>
<rect x="270.9" y="598.6" width="26.8" height="4.4" fill="#1a22d8" stroke="#2a3ae8" stroke-width="1"/>
<rect x="298.7" y="598" width="12" height="22" fill="#1a22c0"/>
<rect x="312.6" y="595.6" width="7.0" height="4.0" fill="#2a1604" stroke="#f0901c" stroke-width="1"/>
<path d="M361.4 532L361.4 549.9" stroke="#777" stroke-width="1" fill="none"/>
<rect x="273" y="611" width="18" height="20" fill="#303030" stroke="#c8c8c8" stroke-width="1.2"/>
<rect x="273" y="658" width="18" height="21" fill="#303030" stroke="#c8c8c8" stroke-width="1.2"/>
<rect x="274" y="612" width="16" height="19" fill="#262626"/>
<rect x="274" y="659" width="16" height="19" fill="#262626"/>
<path d="M273.2 623.7L281 616.5H335M273.2 623.7H335" stroke="#44ee44" stroke-width="1.4" fill="none"/>
<rect x="274.5" y="616" width="2.7" height="59.5" fill="none" stroke="#44ff44" stroke-width="1.1"/>
<rect x="280.5" y="616" width="3.3" height="68.7" fill="none" stroke="#44ff44" stroke-width="1.1"/>
<rect x="258.6" y="663.5" width="52.4" height="4.7" fill="#2a1604" stroke="#f0901c" stroke-width="1.4"/>
<rect x="302.4" y="600" width="9.2" height="87.4" fill="#0c1060"/>
<path d="M303.5 600V687M310.5 600V687" stroke="#3040f0" stroke-width="1.2"/>
<rect x="303" y="620" width="6" height="30" fill="none" stroke="#d878d8" stroke-width="1"/>
<rect x="300.4" y="692.7" width="42.4" height="2.6" fill="#2a1604" stroke="#f0901c" stroke-width="1.2"/>
<rect x="310.3" y="620" width="4.7" height="74" fill="none" stroke="#f0901c" stroke-width="1.2"/>
<rect x="320.3" y="620" width="3.9" height="37" fill="none" stroke="#44ff44" stroke-width="1.2"/>
<rect x="329.5" y="588" width="13.3" height="38.4" fill="none" stroke="#22dd22" stroke-width="1.2"/>
<rect x="329.5" y="675.5" width="23.9" height="3.3" fill="none" stroke="#44ff44" stroke-width="1.2"/>
<rect x="312.3" y="647" width="30.5" height="3.3" fill="#10148a" stroke="#2030e0" stroke-width="1.6"/>
<rect x="312.3" y="651.6" width="30.5" height="3.4" fill="#2a1604" stroke="#f0901c" stroke-width="1.6"/>
<rect x="345.5" y="646.3" width="23.8" height="18.5" fill="#0c3020" stroke="#1a7a3a" stroke-width="1"/>
<rect x="318" y="640" width="12" height="10" fill="none" stroke="#22dd22" stroke-width="1"/>
<path d="M318 628L326 640L326 657" stroke="#44ee44" stroke-width="1.3" fill="none"/>
<rect x="323" y="650" width="4" height="38" fill="none" stroke="#44ff44" stroke-width="1"/>
<rect x="315" y="658" width="25" height="4" fill="none" stroke="#44ff44" stroke-width="1"/>
<rect x="342.8" y="593.3" width="17.2" height="26.5" fill="#222"/>
<rect x="345.5" y="622.4" width="31.5" height="21.2" fill="#108890" stroke="#40f0ff" stroke-width="1.4"/>
<rect x="350" y="627" width="15" height="13" fill="none" stroke="#2fd8ea" stroke-width="1.4"/>
<rect x="356" y="629" width="16" height="9" fill="none" stroke="#2fd8ea" stroke-width="1"/>
<rect x="348" y="624" width="8" height="10" fill="none" stroke="#2fd8ea" stroke-width="1.2"/>
<rect x="352" y="632" width="8" height="10" fill="none" stroke="#2fd8ea" stroke-width="1.2"/>
<rect x="328.2" y="682" width="32.5" height="4" fill="none" stroke="#2fd8ea" stroke-width="1.2"/>
<rect x="357.4" y="629" width="3.3" height="57" fill="none" stroke="#2fd8ea" stroke-width="1"/>
<rect x="341" y="655" width="9" height="25" fill="none" stroke="#2fd8ea" stroke-width="1"/>
<rect x="373" y="606.5" width="238.5" height="6.0" fill="#0b4048" stroke="#2fd8ea" stroke-width="1.3"/>
<rect x="645" y="606.5" width="252" height="6.0" fill="#0b4048" stroke="#2fd8ea" stroke-width="1.3"/>
<rect x="345.5" y="624" width="276.1" height="6" fill="#0a2a1e" stroke="#1a8a4a" stroke-width="1"/>
<rect x="345.5" y="621.6" width="276.1" height="4.9" fill="#0b4048" stroke="#2fd8ea" stroke-width="1.1"/>
<rect x="638.4" y="624" width="54.6" height="6" fill="#0a2a1e" stroke="#1a8a4a" stroke-width="1"/>
<rect x="638.4" y="621.6" width="54.6" height="4.9" fill="#0b4048" stroke="#2fd8ea" stroke-width="1.1"/>
<rect x="693" y="618.4" width="203" height="9.9" fill="#0c3c34" stroke="#2fd0d8" stroke-width="1.2"/>
<path d="M693 625L896 625" stroke="#1a8a5a" stroke-width="1" fill="none"/>
<rect x="896" y="619" width="37.4" height="9.3" fill="#0b4048" stroke="#2fd8ea" stroke-width="1.2"/>
<rect x="368.4" y="660" width="253.2" height="9.5" fill="#0a2a1e" stroke="#1a8a4a" stroke-width="1.1"/>
<rect x="638" y="662.4" width="258" height="9.0" fill="#0a2a1e" stroke="#1a8a4a" stroke-width="1.1"/>
<rect x="668" y="661" width="228" height="5" fill="#0a2a1e" stroke="#1a8a4a" stroke-width="1"/>
<rect x="381" y="676.5" width="239.5" height="6.2" fill="#0b4048" stroke="#2fd8ea" stroke-width="1.3"/>
<rect x="644" y="676.5" width="253" height="5.9" fill="#0b4048" stroke="#2fd8ea" stroke-width="1.3"/>
<rect x="370.6" y="609.2" width="6.0" height="71.6" fill="#0b4048" stroke="#2fd8ea" stroke-width="1.3"/>
<rect x="373" y="607" width="7" height="6" fill="#0b4048" stroke="#2fd8ea" stroke-width="1"/>
<rect x="373" y="677" width="7" height="7" fill="#0b4048" stroke="#2fd8ea" stroke-width="1"/>
<rect x="893.4" y="608" width="6.3" height="74.4" fill="#0b4048" stroke="#2fd8ea" stroke-width="1.3"/>
<rect x="389.5" y="625.7" width="3.3" height="19.9" fill="#0b4048" stroke="#2fd8ea" stroke-width="1"/>
<rect x="378" y="642.3" width="26.4" height="4.7" fill="#0b4048" stroke="#2fd8ea" stroke-width="1"/>
<rect x="433" y="625.7" width="3.3" height="19.9" fill="#0b4048" stroke="#2fd8ea" stroke-width="1"/>
<rect x="420.4" y="642.3" width="27.1" height="4.7" fill="#0b4048" stroke="#2fd8ea" stroke-width="1"/>
<rect x="824" y="625.7" width="3.3" height="19.9" fill="#0b4048" stroke="#2fd8ea" stroke-width="1"/>
<rect x="811.5" y="642.3" width="26.5" height="4.7" fill="#0b4048" stroke="#2fd8ea" stroke-width="1"/>
<rect x="868" y="625.7" width="3.3" height="19.9" fill="#0b4048" stroke="#2fd8ea" stroke-width="1"/>
<rect x="855" y="642.3" width="27" height="4.7" fill="#0b4048" stroke="#2fd8ea" stroke-width="1"/>
<rect x="485" y="606" width="4" height="24" fill="#0b4048" stroke="#2fd8ea" stroke-width="1"/>
<rect x="890" y="618" width="43" height="10.1" fill="#0b4048" stroke="#2fd8ea" stroke-width="1.3"/>
<path d="M933 618L948 611M933 628L948 621" stroke="#2fd8ea" stroke-width="1.2" fill="none"/>
<rect x="948" y="611" width="42.6" height="10" fill="#0b4048" stroke="#2fd8ea" stroke-width="1.3"/>
<rect x="990" y="612" width="10" height="10" fill="#0b4048" stroke="#2fd8ea" stroke-width="1.2"/>
<rect x="995.6" y="600" width="10.8" height="23" fill="#0b4048" stroke="#2fd8ea" stroke-width="1.3"/>
<rect x="890" y="628.9" width="115" height="5.7" fill="#0b4048" stroke="#2fd8ea" stroke-width="1.2"/>
<rect x="915.9" y="638.2" width="126.4" height="3.6" fill="#0e480e" stroke="#44ff44" stroke-width="1.2"/>
<rect x="890" y="646" width="143.7" height="26" fill="#0a2a1e" stroke="#1a8a4a" stroke-width="0.6"/>
<rect x="895.7" y="654.7" width="116.3" height="3.6" fill="#2a1604" stroke="#f0901c" stroke-width="1.3"/>
<rect x="915" y="645" width="3" height="33" fill="#2a1604" stroke="#f0901c" stroke-width="1.2"/>
<path d="M970.5 678L1071.8 678L1071.8 672L1127 672" stroke="#f0901c" stroke-width="1.6" fill="none"/>
<rect x="920" y="674" width="20" height="5" fill="#5a0606" stroke="#e82020" stroke-width="1.2"/>
<rect x="916" y="633" width="2.7" height="19" fill="none" stroke="#44ff44" stroke-width="1.1"/>
<rect x="924.5" y="646" width="37.3" height="3" fill="none" stroke="#44ff44" stroke-width="1.1"/>
<rect x="898.6" y="646" width="77.4" height="6" fill="#0a2a1e" stroke="#1a8a4a" stroke-width="1.1"/>
<rect x="940" y="660.5" width="43" height="5.5" fill="#2a1604" stroke="#f0901c" stroke-width="1.1"/>
<rect x="953" y="659" width="3" height="27.3" fill="none" stroke="#44ff44" stroke-width="1.1"/>
<rect x="967.6" y="639" width="4.4" height="56" fill="none" stroke="#f0901c" stroke-width="1.1"/>
<rect x="980.5" y="652" width="2.9" height="22.8" fill="none" stroke="#1a8a4a" stroke-width="1.1"/>
<path d="M922.3 692L922.3 687L1115.6 687L1115.6 666" stroke="#22dd22" stroke-width="1.5" fill="none"/>
<path d="M923.3 725L923.3 693.5L970.5 693.5" stroke="#f0901c" stroke-width="1.3" fill="none"/>
<path d="M921.5 725L921.5 691L970.5 691" stroke="#d060c0" stroke-width="1.1" fill="none"/>
<rect x="1525.9" y="635.5" width="46.1" height="3.0" fill="none" stroke="#f0901c" stroke-width="1.0"/>
<rect x="1286.7" y="681.9" width="19.8" height="5.0" fill="none" stroke="#f0901c" stroke-width="1.0"/>
<rect x="1062.6" y="649.6" width="46.1" height="3.5" fill="none" stroke="#44ff44" stroke-width="1.0"/>
<rect x="1316.0" y="685.3" width="36.8" height="3.5" fill="none" stroke="#22dd22" stroke-width="1.0"/>
<rect x="1269.6" y="612.0" width="44.8" height="4.0" fill="none" stroke="#44ff44" stroke-width="1.0"/>
<rect x="1439.6" y="616.3" width="50.1" height="4.0" fill="none" stroke="#f0901c" stroke-width="1.0"/>
<rect x="1263.8" y="605.7" width="26.3" height="5.0" fill="none" stroke="#44ff44" stroke-width="1.0"/>
<rect x="1110.8" y="652.7" width="31.5" height="3.5" fill="none" stroke="#2030e0" stroke-width="1.0"/>
<rect x="1415.8" y="607.4" width="42.2" height="4.0" fill="none" stroke="#e82020" stroke-width="1.0"/>
<rect x="1199.0" y="654.8" width="43.1" height="3.5" fill="none" stroke="#e82020" stroke-width="1.0"/>
<rect x="1129.0" y="684.0" width="68.0" height="3.0" fill="none" stroke="#2030e0" stroke-width="1.0"/>
<rect x="1270.5" y="671.0" width="4.0" height="19.8" fill="none" stroke="#2030e0" stroke-width="1.0"/>
<rect x="1230.3" y="671.7" width="20.2" height="4.0" fill="none" stroke="#22dd22" stroke-width="1.0"/>
<rect x="1361.6" y="605.8" width="4.0" height="19.1" fill="none" stroke="#f0901c" stroke-width="1.0"/>
<rect x="1443.4" y="625.6" width="51.7" height="3.0" fill="none" stroke="#22dd22" stroke-width="1.0"/>
<rect x="1137.8" y="655.0" width="27.0" height="4.0" fill="none" stroke="#f0901c" stroke-width="1.0"/>
<rect x="1388.6" y="635.8" width="5.0" height="9.4" fill="none" stroke="#44ff44" stroke-width="1.0"/>
<rect x="1168.1" y="625.0" width="38.7" height="4.0" fill="none" stroke="#f0901c" stroke-width="1.0"/>
<rect x="1177.0" y="632.3" width="3.5" height="10.6" fill="none" stroke="#e82020" stroke-width="1.0"/>
<rect x="1004.1" y="659.3" width="60.7" height="3.5" fill="none" stroke="#44ff44" stroke-width="1.0"/>
<rect x="1089.7" y="613.1" width="48.5" height="4.0" fill="none" stroke="#44ff44" stroke-width="1.0"/>
<rect x="1357.3" y="646.4" width="3.0" height="15.8" fill="none" stroke="#44ff44" stroke-width="1.0"/>
<rect x="1528.5" y="661.3" width="36.9" height="5.0" fill="none" stroke="#2030e0" stroke-width="1.0"/>
<rect x="1220.4" y="636.0" width="69.2" height="5.0" fill="none" stroke="#44ff44" stroke-width="1.0"/>
<rect x="977.0" y="654.1" width="46.2" height="3.0" fill="none" stroke="#44ff44" stroke-width="1.0"/>
<rect x="1307.0" y="606.3" width="35.7" height="4.0" fill="none" stroke="#f0901c" stroke-width="1.0"/>
<rect x="1299.5" y="642.7" width="41.8" height="5.0" fill="none" stroke="#f0901c" stroke-width="1.0"/>
<rect x="1221.9" y="607.7" width="33.9" height="4.0" fill="none" stroke="#f0901c" stroke-width="1.0"/>
<rect x="1447.9" y="614.5" width="67.3" height="4.0" fill="none" stroke="#f0901c" stroke-width="1.0"/>
<rect x="1357.0" y="682.3" width="4.0" height="11.7" fill="none" stroke="#44ff44" stroke-width="1.0"/>
<rect x="1361.0" y="623.5" width="24.2" height="3.5" fill="none" stroke="#44ff44" stroke-width="1.0"/>
<rect x="1259.7" y="645.2" width="3.5" height="21.7" fill="none" stroke="#f0901c" stroke-width="1.0"/>
<rect x="1389.6" y="620.4" width="34.6" height="3.0" fill="none" stroke="#f0901c" stroke-width="1.0"/>
<rect x="1422.5" y="642.5" width="48.3" height="4.0" fill="none" stroke="#44ff44" stroke-width="1.0"/>
<rect x="1434.6" y="665.1" width="68.6" height="3.0" fill="none" stroke="#f0901c" stroke-width="1.0"/>
<rect x="971.9" y="642.3" width="41.6" height="3.0" fill="none" stroke="#44ff44" stroke-width="1.0"/>
<rect x="1500.5" y="631.0" width="3.0" height="23.4" fill="none" stroke="#f0901c" stroke-width="1.0"/>
<rect x="1371.0" y="617.9" width="5.0" height="21.5" fill="none" stroke="#2030e0" stroke-width="1.0"/>
<rect x="961.8" y="685.2" width="5.0" height="8.8" fill="none" stroke="#f0901c" stroke-width="1.0"/>
<rect x="1379.7" y="615.3" width="23.4" height="5.0" fill="none" stroke="#44ff44" stroke-width="1.0"/>
<rect x="1334.6" y="655.0" width="41.1" height="4.0" fill="none" stroke="#2030e0" stroke-width="1.0"/>
<rect x="1264.4" y="611.8" width="68.4" height="3.0" fill="none" stroke="#44ff44" stroke-width="1.0"/>
<rect x="1395.9" y="612.5" width="3.5" height="22.1" fill="none" stroke="#f0901c" stroke-width="1.0"/>
<rect x="923.3" y="619.2" width="57.0" height="4.0" fill="none" stroke="#44ff44" stroke-width="1.0"/>
<rect x="1261.6" y="675.1" width="55.6" height="5.0" fill="none" stroke="#44ff44" stroke-width="1.0"/>
<rect x="1287.1" y="681.4" width="65.5" height="3.5" fill="none" stroke="#22dd22" stroke-width="1.0"/>
<rect x="1004.5" y="645.9" width="3.5" height="18.4" fill="none" stroke="#f0901c" stroke-width="1.0"/>
<rect x="1428.5" y="615.5" width="54.8" height="3.0" fill="none" stroke="#2030e0" stroke-width="1.0"/>
<rect x="1351.9" y="647.8" width="57.7" height="3.0" fill="none" stroke="#f0901c" stroke-width="1.0"/>
<rect x="1030.3" y="603.8" width="39.9" height="3.0" fill="none" stroke="#44ff44" stroke-width="1.0"/>
<rect x="1490.6" y="605.7" width="68.5" height="3.5" fill="none" stroke="#2030e0" stroke-width="1.0"/>
<rect x="1086.6" y="645.7" width="3.5" height="19.9" fill="none" stroke="#e82020" stroke-width="1.0"/>
<rect x="1509.4" y="680.3" width="39.6" height="5.0" fill="none" stroke="#44ff44" stroke-width="1.0"/>
<rect x="1162.0" y="628.4" width="5.0" height="9.3" fill="none" stroke="#44ff44" stroke-width="1.0"/>
<rect x="1103.3" y="611.0" width="4.0" height="10.4" fill="none" stroke="#22dd22" stroke-width="1.0"/>
<rect x="1538.7" y="619.8" width="5.0" height="23.0" fill="none" stroke="#44ff44" stroke-width="1.0"/>
<rect x="1553.4" y="674.9" width="18.6" height="5.0" fill="none" stroke="#44ff44" stroke-width="1.0"/>
<rect x="1180.9" y="632.1" width="35.2" height="4.0" fill="none" stroke="#f0901c" stroke-width="1.0"/>
<rect x="1205.4" y="663.3" width="43.5" height="4.0" fill="none" stroke="#f0901c" stroke-width="1.0"/>
<rect x="1534.3" y="610.2" width="3.5" height="24.5" fill="none" stroke="#f0901c" stroke-width="1.0"/>
<rect x="960.1" y="624.5" width="3.5" height="12.6" fill="none" stroke="#44ff44" stroke-width="1.0"/>
<rect x="1442.0" y="676.5" width="4.0" height="14.9" fill="none" stroke="#44ff44" stroke-width="1.0"/>
<rect x="1507.1" y="651.4" width="3.0" height="12.7" fill="none" stroke="#f0901c" stroke-width="1.0"/>
<rect x="1355.8" y="638.3" width="66.6" height="3.0" fill="none" stroke="#2030e0" stroke-width="1.0"/>
<rect x="1075.7" y="654.7" width="29.5" height="3.0" fill="none" stroke="#2030e0" stroke-width="1.0"/>
<rect x="912.6" y="689.5" width="65.3" height="3.5" fill="none" stroke="#f0901c" stroke-width="1.0"/>
<rect x="1250.1" y="621.5" width="23.9" height="3.0" fill="none" stroke="#44ff44" stroke-width="1.0"/>
<rect x="1037.2" y="628.1" width="56.7" height="4.0" fill="none" stroke="#44ff44" stroke-width="1.0"/>
<rect x="1232.6" y="616.0" width="16.0" height="4.0" fill="none" stroke="#f0901c" stroke-width="1.0"/>
<rect x="915.1" y="666.0" width="25.4" height="5.0" fill="none" stroke="#44ff44" stroke-width="1.0"/>
<path d="M1517.2 609.8L1572 609.8" stroke="#f0901c" stroke-width="1.1" fill="none"/>
<path d="M1335.0 650.2L1445.0 650.2" stroke="#f0901c" stroke-width="1.1" fill="none"/>
<path d="M1106.6 619.8L1157.3 619.8" stroke="#e82020" stroke-width="1.1" fill="none"/>
<path d="M1450.1 665.0L1537.4 665.0" stroke="#f0901c" stroke-width="1.1" fill="none"/>
<path d="M1553.1 690.3L1572 690.3" stroke="#f0901c" stroke-width="1.1" fill="none"/>
<path d="M951.3 668.2L1004.3 668.2" stroke="#44ff44" stroke-width="1.1" fill="none"/>
<path d="M941.3 661.2L1005.6 661.2" stroke="#f0901c" stroke-width="1.1" fill="none"/>
<path d="M1344.2 625.9L1396.0 625.9" stroke="#e82020" stroke-width="1.1" fill="none"/>
<path d="M934.6 617.1L988.8 617.1" stroke="#22dd22" stroke-width="1.1" fill="none"/>
<path d="M1077.4 688.5L1195.0 688.5" stroke="#44ff44" stroke-width="1.1" fill="none"/>
<path d="M1116.9 603.2L1226.3 603.2" stroke="#e82020" stroke-width="1.1" fill="none"/>
<path d="M1138.6 600.1L1202.9 600.1" stroke="#f0901c" stroke-width="1.1" fill="none"/>
<path d="M1087.7 660.4L1140.0 660.4" stroke="#f0901c" stroke-width="1.1" fill="none"/>
<path d="M964.5 675.2L1007.5 675.2" stroke="#44ff44" stroke-width="1.1" fill="none"/>
<path d="M932.3 602.1L989.7 602.1" stroke="#e82020" stroke-width="1.1" fill="none"/>
<path d="M960.3 688.1L1067.1 688.1" stroke="#f0901c" stroke-width="1.1" fill="none"/>
<path d="M1335.7 665.9L1444.8 665.9" stroke="#f0901c" stroke-width="1.1" fill="none"/>
<path d="M1405.6 666.3L1480.1 666.3" stroke="#f0901c" stroke-width="1.1" fill="none"/>
<path d="M1379.3 659.2L1413.3 659.2" stroke="#22dd22" stroke-width="1.1" fill="none"/>
<path d="M1315.9 667.5L1419.0 667.5" stroke="#e82020" stroke-width="1.1" fill="none"/>
<path d="M1501.0 669.3L1572 669.3" stroke="#f0901c" stroke-width="1.1" fill="none"/>
<path d="M1446.3 653.7L1556.7 653.7" stroke="#44ff44" stroke-width="1.1" fill="none"/>
<path d="M960.7 603.9L1048.1 603.9" stroke="#f0901c" stroke-width="1.1" fill="none"/>
<path d="M1151.7 641.5L1186.3 641.5" stroke="#44ff44" stroke-width="1.1" fill="none"/>
<path d="M1315.2 662.6L1389.2 662.6" stroke="#44ff44" stroke-width="1.1" fill="none"/>
<path d="M1204.3 606.5L1318.2 606.5" stroke="#44ff44" stroke-width="1.1" fill="none"/>
<path d="M965.2 648.4L1062.3 648.4" stroke="#e82020" stroke-width="1.1" fill="none"/>
<path d="M1070.2 606.8L1124.1 606.8" stroke="#f0901c" stroke-width="1.1" fill="none"/>
<path d="M1056.1 659.8L1127.6 659.8" stroke="#f0901c" stroke-width="1.1" fill="none"/>
<path d="M955.3 683.8L1011.1 683.8" stroke="#f0901c" stroke-width="1.1" fill="none"/>
<rect x="1001.4" y="594.4" width="433.6" height="11.6" fill="#0b4048" stroke="#2fd8ea" stroke-width="1.3"/>
<path d="M1258 597.5L1435 597.5" stroke="#2a3ae8" stroke-width="3" fill="none"/>
<rect x="1049" y="594" width="37.4" height="4.3" fill="#0e480e" stroke="#44ff44" stroke-width="1.2"/>
<rect x="1021.6" y="600.3" width="26.7" height="7.7" fill="#082808" stroke="#22dd22" stroke-width="1.2"/>
<rect x="1115" y="596.4" width="35" height="3.2" fill="#0e480e" stroke="#44ff44" stroke-width="1.1"/>
<rect x="1209" y="595" width="49" height="6.5" fill="#082808" stroke="#22dd22" stroke-width="1.2"/>
<path d="M1150 596.4L1170 596.4" stroke="#22dd22" stroke-width="1.2" fill="none"/>
<rect x="1056" y="607.2" width="379" height="8.9" fill="#082808" stroke="#22dd22" stroke-width="1.4"/>
<rect x="1018.4" y="600" width="7.6" height="46" fill="#082808" stroke="#22dd22" stroke-width="1.2"/>
<rect x="1031" y="611" width="9.7" height="60.4" fill="#0a2a1e" stroke="#1a8a4a" stroke-width="1.1"/>
<rect x="1001" y="600" width="5.4" height="23" fill="#0b4048" stroke="#2fd8ea" stroke-width="1.2"/>
<rect x="1059" y="618.7" width="34.4" height="3.8" fill="#2a1604" stroke="#f0901c" stroke-width="1.2"/>
<rect x="1116.3" y="616.8" width="28.0" height="3.2" fill="#2a1604" stroke="#f0901c" stroke-width="1.2"/>
<rect x="1029.2" y="625.7" width="270.8" height="3.3" fill="#0e480e" stroke="#44ff44" stroke-width="1.2"/>
<path d="M1029.2 633.3L1150 633.3" stroke="#f0901c" stroke-width="1.2" fill="none"/>
<rect x="1000" y="638.4" width="94" height="3.2" fill="#0e480e" stroke="#44ff44" stroke-width="1.2"/>
<path d="M1033 643.5L1094 643.5" stroke="#22dd22" stroke-width="1" fill="none"/>
<rect x="1022.9" y="646" width="69.1" height="5.1" fill="#2a1604" stroke="#f0901c" stroke-width="1.3"/>
<rect x="1095" y="641.6" width="33.4" height="2.4" fill="#2a1604" stroke="#f0901c" stroke-width="1.1"/>
<rect x="1125.2" y="644" width="3.2" height="28.7" fill="#2a1604" stroke="#f0901c" stroke-width="1.1"/>
<path d="M1050 668L1050 652.4L1115.7 652.4" stroke="#22dd22" stroke-width="2.2" fill="none"/>
<rect x="1074" y="650" width="4" height="18" fill="#0e480e" stroke="#44ff44" stroke-width="1.1"/>
<rect x="1033.7" y="661.9" width="71.8" height="3.8" fill="#2a1604" stroke="#f0901c" stroke-width="1.2"/>
<rect x="1071.2" y="671.4" width="78.8" height="3.2" fill="#2a1604" stroke="#f0901c" stroke-width="1.2"/>
<rect x="1000" y="675.9" width="72.5" height="3.8" fill="#2a1604" stroke="#f0901c" stroke-width="1.2"/>
<rect x="1115" y="677.2" width="35" height="5.0" fill="#082808" stroke="#22dd22" stroke-width="1.2"/>
<rect x="1113" y="652.4" width="3.3" height="36.2" fill="#0e480e" stroke="#44ff44" stroke-width="1.2"/>
<path d="M1000 687L1082.6 687" stroke="#22dd22" stroke-width="1.8" fill="none"/>
<path d="M1000 689.5L1300 689.5" stroke="#e82020" stroke-width="1.5" fill="none"/>
<path d="M970 691.8L1300 691.8" stroke="#9a28c0" stroke-width="1.6" fill="none"/>
<path d="M970 694.3L1300 694.3" stroke="#2a3ae8" stroke-width="2" fill="none"/>
<path d="M1087.7 655L1087.7 695" stroke="#b01010" stroke-width="1.2" fill="none"/>
<path d="M1093.4 655L1093.4 695" stroke="#b01010" stroke-width="1.2" fill="none"/>
<rect x="1082" y="618" width="6" height="8" fill="none" stroke="#f0901c" stroke-width="1.1"/>
<rect x="1084" y="628" width="8" height="12" fill="none" stroke="#f0901c" stroke-width="1.1"/>
<rect x="1082" y="628" width="8" height="17" fill="#0e480e" stroke="#44ff44" stroke-width="1.1"/>
<rect x="1097" y="632" width="5" height="16" fill="none" stroke="#f0901c" stroke-width="1"/>
<rect x="1172" y="596" width="3.4" height="69" fill="#10148a" stroke="#2030e0" stroke-width="2"/>
<rect x="1284" y="596" width="4" height="47.5" fill="#10148a" stroke="#2030e0" stroke-width="2"/>
<path d="M1180 645L1180 615L1252.5 615L1252.5 627" stroke="#33ee33" stroke-width="2.2" fill="none"/>
<path d="M1175.4 618.7L1204.7 618.7L1204.7 630" stroke="#9a28c0" stroke-width="1.6" fill="none"/>
<path d="M1169 618.7L1234 618.7" stroke="#f0901c" stroke-width="1.2" fill="none"/>
<rect x="1234" y="618" width="11" height="5" fill="#2a1604" stroke="#f0901c" stroke-width="1.2"/>
<rect x="1251.7" y="618" width="16.3" height="5" fill="#2a1604" stroke="#f0901c" stroke-width="1.2"/>
<rect x="1150" y="626.3" width="150" height="7.7" fill="#2a1604" stroke="#f0901c" stroke-width="1.4"/>
<rect x="1163" y="626" width="6" height="8" fill="#0e480e" stroke="#44ff44" stroke-width="1.2"/>
<rect x="1242.8" y="618" width="3.2" height="19.8" fill="#2a1604" stroke="#f0901c" stroke-width="1.1"/>
<rect x="1246" y="635.8" width="50.8" height="2.6" fill="#2a1604" stroke="#f0901c" stroke-width="1.1"/>
<rect x="1175.4" y="638.4" width="92.8" height="5.1" fill="#0e480e" stroke="#44ff44" stroke-width="1.5"/>
<rect x="1155" y="596" width="3.3" height="56.4" fill="#0e480e" stroke="#44ff44" stroke-width="1.2"/>
<rect x="1265" y="640" width="4.5" height="15" fill="#0e480e" stroke="#44ff44" stroke-width="1.2"/>
<rect x="1265" y="648.6" width="35" height="5.0" fill="#082808" stroke="#22dd22" stroke-width="1.3"/>
<rect x="1150" y="648.6" width="50.8" height="5.7" fill="#2a1604" stroke="#f0901c" stroke-width="1.3"/>
<path d="M1210 641.6L1210 655.5L1218 655.5L1218 669.5" stroke="#33ee33" stroke-width="2.2" fill="none"/>
<rect x="1222.5" y="655.5" width="77.5" height="5.8" fill="#2a1604" stroke="#f0901c" stroke-width="1.4"/>
<path d="M1199 650L1199 663.5L1231.4 663.5" stroke="#f0901c" stroke-width="2.2" fill="none"/>
<rect x="1231.4" y="666.4" width="68.6" height="6.3" fill="#304008" stroke="#a0c020" stroke-width="1.3"/>
<path d="M1231.4 666.4L1300 666.4" stroke="#44ff44" stroke-width="1.5" fill="none"/>
<rect x="1150" y="669.5" width="81.4" height="5.1" fill="#2a1604" stroke="#f0901c" stroke-width="1.3"/>
<rect x="1150" y="676.5" width="84" height="5.1" fill="#082808" stroke="#22dd22" stroke-width="1.3"/>
<path d="M1241.5 674L1277 674" stroke="#9a28c0" stroke-width="1.5" fill="none"/>
<rect x="1274.6" y="674" width="3.1" height="16.5" fill="#0e480e" stroke="#44ff44" stroke-width="1.1"/>
<rect x="1282" y="676.5" width="18" height="5.1" fill="#10148a" stroke="#2030e0" stroke-width="1.5"/>
<rect x="1290" y="683" width="10" height="7" fill="#2a1604" stroke="#f0901c" stroke-width="1"/>
<rect x="1239" y="672" width="3.8" height="23" fill="#10148a" stroke="#2030e0" stroke-width="1.5"/>
<path d="M1245.3 680L1245.3 695" stroke="#a01010" stroke-width="1.2" fill="none"/>
<rect x="1185" y="650" width="7" height="10" fill="#2a1604" stroke="#f0901c" stroke-width="1"/>
<rect x="1140" y="648" width="6" height="12" fill="#2a1604" stroke="#f0901c" stroke-width="1"/>
<rect x="1128" y="641" width="6" height="15" fill="#2a1604" stroke="#f0901c" stroke-width="1"/>
<rect x="1314.8" y="599.6" width="3.2" height="92.2" fill="#0e480e" stroke="#44ff44" stroke-width="1.2"/>
<rect x="1336.4" y="599" width="3.2" height="13" fill="#0e480e" stroke="#44ff44" stroke-width="1.1"/>
<path d="M1292.5 618L1305 618L1305 679" stroke="#f0901c" stroke-width="2.2" fill="none"/>
<rect x="1330" y="616.1" width="3.9" height="14.7" fill="#2a1604" stroke="#f0901c" stroke-width="1.1"/>
<rect x="1318" y="626.3" width="49.5" height="7.7" fill="#5a0606" stroke="#e82020" stroke-width="1.4"/>
<rect x="1367.5" y="628.9" width="87.3" height="9.5" fill="#5a0606" stroke="#e82020" stroke-width="1.3"/>
<path d="M1367.5 628.9L1380 638.4" stroke="#f0901c" stroke-width="2" fill="none"/>
<rect x="1384" y="623.1" width="47" height="3.9" fill="#2a1604" stroke="#f0901c" stroke-width="1.1"/>
<rect x="1290" y="636.5" width="6.4" height="2.5" fill="#2a1604" stroke="#f0901c" stroke-width="1"/>
<rect x="1401.2" y="634.6" width="5.8" height="20.4" fill="#5a0606" stroke="#e82020" stroke-width="1.1"/>
<path d="M1340 682.9L1340 643L1370.7 643" stroke="#f0901c" stroke-width="2.4" fill="none"/>
<rect x="1290" y="648.6" width="150" height="5.0" fill="#082808" stroke="#22dd22" stroke-width="1.3"/>
<rect x="1348.5" y="649.2" width="3.2" height="42.6" fill="#0e480e" stroke="#44ff44" stroke-width="1.1"/>
<rect x="1290" y="655.5" width="96.6" height="5.8" fill="#2a1604" stroke="#f0901c" stroke-width="1.3"/>
<rect x="1386.6" y="656.2" width="53.4" height="5.1" fill="#082808" stroke="#22dd22" stroke-width="1.3"/>
<rect x="1290" y="668.3" width="150" height="6.3" fill="#304008" stroke="#a0c020" stroke-width="1.3"/>
<path d="M1290 668.3L1440 668.3" stroke="#44ff44" stroke-width="1.6" fill="none"/>
<path d="M1290 674.6L1440 674.6" stroke="#44ff44" stroke-width="1.6" fill="none"/>
<rect x="1290" y="675.9" width="150" height="5.7" fill="#10148a" stroke="#2030e0" stroke-width="1.3"/>
<path d="M1290 684.8L1385.3 684.8" stroke="#f0901c" stroke-width="1.3" fill="none"/>
<path d="M1290 691.8L1385.3 691.8" stroke="#33ee33" stroke-width="1.6" fill="none"/>
<path d="M1385 692L1398 683" stroke="#33ee33" stroke-width="3.5" fill="none"/>
<path d="M1398 685.4L1440 685.4" stroke="#33ee33" stroke-width="1.3" fill="none"/>
<path d="M1434 597.5L1571 597.5" stroke="#2a3ae8" stroke-width="3" fill="none"/>
<rect x="1463" y="594" width="42" height="16" fill="#0b4048" stroke="#2fd8ea" stroke-width="1.2"/>
<rect x="1505" y="598" width="35" height="12" fill="#222222" stroke="#3a3a3a" stroke-width="0.6"/>
<path d="M1542 596L1542 610" stroke="#2fd8ea" stroke-width="1.2" fill="none"/>
<path d="M1545 596L1545 610" stroke="#2fd8ea" stroke-width="1.2" fill="none"/>
<path d="M1548 596L1548 610" stroke="#2fd8ea" stroke-width="1.2" fill="none"/>
<rect x="1535" y="614" width="17" height="18" fill="#0b4048" stroke="#2fd8ea" stroke-width="1.2"/>
<rect x="1540" y="618" width="8" height="10" fill="#0b4048" stroke="#2fd8ea" stroke-width="1"/>
<rect x="1480" y="614" width="55" height="6" fill="#0b4048" stroke="#2fd8ea" stroke-width="1"/>
<rect x="1435" y="607.2" width="19.8" height="8.9" fill="#082808" stroke="#22dd22" stroke-width="1.3"/>
<rect x="1435" y="594.5" width="19.8" height="11.5" fill="#0b4048" stroke="#2fd8ea" stroke-width="1.2"/>
<rect x="1454.8" y="617.6" width="94.2" height="10.4" fill="#082808" stroke="#22dd22" stroke-width="1.3"/>
<rect x="1454.8" y="617.6" width="25.2" height="10.4" fill="#0a2a1e" stroke="#1a8a4a" stroke-width="0.8"/>
<rect x="1474.9" y="617" width="14.4" height="23" fill="#2a0a0a" stroke="#a02020" stroke-width="1"/>
<rect x="1454" y="635.3" width="58" height="7.2" fill="#5a0606" stroke="#e82020" stroke-width="1.3"/>
<rect x="1512" y="635.3" width="62" height="6.5" fill="#2a1604" stroke="#f0901c" stroke-width="1.3"/>
<rect x="1512" y="639" width="85.7" height="5" fill="#082808" stroke="#22dd22" stroke-width="1.2"/>
<rect x="1482" y="644.7" width="67.6" height="8.6" fill="#10148a" stroke="#2030e0" stroke-width="1.3"/>
<rect x="1549.6" y="644.7" width="23.0" height="6.3" fill="#5a0606" stroke="#e82020" stroke-width="1.3"/>
<rect x="1440" y="648.2" width="42" height="5.8" fill="#082808" stroke="#22dd22" stroke-width="1.3"/>
<rect x="1460.5" y="656" width="87.5" height="5.2" fill="#0e480e" stroke="#44ff44" stroke-width="1.4"/>
<rect x="1440" y="655.4" width="20" height="5.8" fill="#2a1604" stroke="#f0901c" stroke-width="1"/>
<rect x="1548" y="655.4" width="52" height="5.8" fill="#2a1604" stroke="#f0901c" stroke-width="1.2"/>
<rect x="1597" y="656" width="3.6" height="12" fill="#2a1604" stroke="#f0901c" stroke-width="1"/>
<rect x="1440" y="667" width="108" height="7.8" fill="#304008" stroke="#a0c020" stroke-width="1.3"/>
<path d="M1440 667L1548 667" stroke="#44ff44" stroke-width="1.6" fill="none"/>
<path d="M1440 674.8L1548 674.8" stroke="#44ff44" stroke-width="1.6" fill="none"/>
<rect x="1548" y="667" width="25.3" height="8" fill="#5a0606" stroke="#e82020" stroke-width="1.2"/>
<rect x="1440" y="676.3" width="131" height="5.7" fill="#10148a" stroke="#2030e0" stroke-width="1.3"/>
<rect x="1528" y="682" width="43" height="6" fill="#10148a" stroke="#2030e0" stroke-width="1.2"/>
<path d="M1440 685.6L1479 685.6" stroke="#33ee33" stroke-width="1.3" fill="none"/>
<rect x="1479" y="687" width="22.5" height="4.3" fill="#082808" stroke="#22dd22" stroke-width="1.2"/>
<rect x="1513.7" y="683.4" width="14.3" height="11.6" fill="#2a0a3a" stroke="#9a28c0" stroke-width="0.8"/>
<path d="M1475 692.8L1571 692.8" stroke="#9a28c0" stroke-width="1.2" fill="none"/>
<rect x="1477" y="675" width="4" height="15" fill="none" stroke="#44ff44" stroke-width="1"/>
<rect x="1445" y="640" width="5" height="20" fill="#2a1604" stroke="#f0901c" stroke-width="1"/>
<rect x="1520" y="645" width="6" height="15" fill="#0e480e" stroke="#44ff44" stroke-width="1"/>
<rect x="1605" y="636.8" width="23" height="7.2" fill="#3a1a3a" stroke="#d878d8" stroke-width="1.2"/>
<rect x="1610" y="645.8" width="12.5" height="13.5" fill="#222222" stroke="#3a3a3a" stroke-width="0.6"/>
<rect x="1605" y="662.6" width="23" height="7.2" fill="#3a1a3a" stroke="#d878d8" stroke-width="1.2"/>
<rect x="1580" y="672" width="11" height="8" fill="#222222" stroke="#3a3a3a" stroke-width="0.8"/>
<rect x="1580" y="683" width="11" height="7" fill="#222222" stroke="#3a3a3a" stroke-width="0.8"/>
<path d="M1585.5 668L1585.5 683" stroke="#555" stroke-width="1" fill="none"/>
<rect x="1607" y="686.3" width="18" height="4.3" fill="#303030" stroke="#c8c8c8" stroke-width="1"/>
<rect x="1642" y="592" width="30.7" height="25" fill="#222222" stroke="#3a3a3a" stroke-width="0.5"/>
<rect x="1655.6" y="633" width="30.4" height="25.6" fill="#222222" stroke="#3a3a3a" stroke-width="0.5"/>
<rect x="1671.5" y="677.7" width="22.0" height="8.0" fill="#3a1a3a" stroke="#d878d8" stroke-width="1.2"/>
<rect x="1676.4" y="687.4" width="11.0" height="14.6" fill="#222222" stroke="#3a3a3a" stroke-width="0.5"/>
<rect x="1674.4" y="704" width="16.6" height="15.7" fill="#303030" stroke="#c8c8c8" stroke-width="1.2"/>
<rect x="1579.7" y="730.3" width="15.9" height="9.0" fill="#303030" stroke="#c8c8c8" stroke-width="1"/>
<rect x="1674.4" y="735" width="16.6" height="4.3" fill="#303030" stroke="#c8c8c8" stroke-width="1"/>
<path d="M1652 741L1674 741" stroke="#666" stroke-width="1" fill="none"/>
<path d="M1603 748.6L1603 764.5" stroke="#777" stroke-width="1" fill="none"/>
<path d="M1649.5 748.6L1649.5 764.5" stroke="#777" stroke-width="1" fill="none"/>
<path d="M1693 748.6L1693 764.5" stroke="#777" stroke-width="1" fill="none"/>
<path d="M1597.7 696L1597.7 708" stroke="#777" stroke-width="1" fill="none"/>
<path d="M268.5 520L268.5 727" stroke="#c81818" stroke-width="1.1" fill="none"/>
<path d="M295.5 520L295.5 727" stroke="#c81818" stroke-width="1.1" fill="none"/>
<path d="M319.5 520L319.5 727" stroke="#c81818" stroke-width="1.1" fill="none"/>
<path d="M364.5 520L364.5 727" stroke="#c81818" stroke-width="1.1" fill="none"/>
<path d="M408.5 520L408.5 727" stroke="#c81818" stroke-width="1.1" fill="none"/>
<path d="M456.5 520L456.5 727" stroke="#c81818" stroke-width="1.1" fill="none"/>
<path d="M505.5 520L505.5 727" stroke="#c81818" stroke-width="1.1" fill="none"/>
<path d="M554.5 520L554.5 727" stroke="#c81818" stroke-width="1.1" fill="none"/>
<path d="M603.5 520L603.5 727" stroke="#c81818" stroke-width="1.1" fill="none"/>
<path d="M652.5 520L652.5 727" stroke="#c81818" stroke-width="1.1" fill="none"/>
<path d="M701.5 520L701.5 727" stroke="#c81818" stroke-width="1.1" fill="none"/>
<path d="M750.5 520L750.5 727" stroke="#c81818" stroke-width="1.1" fill="none"/>
<path d="M799.5 520L799.5 727" stroke="#c81818" stroke-width="1.1" fill="none"/>
<path d="M847.5 520L847.5 727" stroke="#c81818" stroke-width="1.1" fill="none"/>
<path d="M896.5 520L896.5 727" stroke="#c81818" stroke-width="1.1" fill="none"/>
<path d="M945.5 520L945.5 727" stroke="#c81818" stroke-width="1.1" fill="none"/>
<path d="M989.5 520L989.5 727" stroke="#c81818" stroke-width="1.1" fill="none"/>
<path d="M1017.5 520L1017.5 727" stroke="#c81818" stroke-width="1.1" fill="none"/>
<path d="M1056.5 520L1056.5 727" stroke="#c81818" stroke-width="1.1" fill="none"/>
<path d="M1098.5 520L1098.5 727" stroke="#c81818" stroke-width="1.1" fill="none"/>
<path d="M1141.5 520L1141.5 727" stroke="#c81818" stroke-width="1.1" fill="none"/>
<path d="M1188.5 520L1188.5 727" stroke="#c81818" stroke-width="1.1" fill="none"/>
<path d="M1231.5 520L1231.5 727" stroke="#c81818" stroke-width="1.1" fill="none"/>
<path d="M1277.5 520L1277.5 727" stroke="#c81818" stroke-width="1.1" fill="none"/>
<path d="M1326.5 520L1326.5 727" stroke="#c81818" stroke-width="1.1" fill="none"/>
<path d="M1370.5 520L1370.5 727" stroke="#c81818" stroke-width="1.1" fill="none"/>
<path d="M1416.5 520L1416.5 727" stroke="#c81818" stroke-width="1.1" fill="none"/>
<path d="M1451.5 520L1451.5 727" stroke="#c81818" stroke-width="1.1" fill="none"/>
<path d="M1494.5 520L1494.5 727" stroke="#c81818" stroke-width="1.1" fill="none"/>
<path d="M1536.5 520L1536.5 727" stroke="#c81818" stroke-width="1.1" fill="none"/>
<path d="M1568.5 520L1568.5 727" stroke="#c81818" stroke-width="1.1" fill="none"/>
<path d="M1604.5 520L1604.5 727" stroke="#c81818" stroke-width="1.1" fill="none"/>
<path d="M1648.5 520L1648.5 727" stroke="#c81818" stroke-width="1.1" fill="none"/>
<path d="M1693.5 520L1693.5 727" stroke="#c81818" stroke-width="1.1" fill="none"/>
<path d="M258.5 592.5L1710 592.5" stroke="#c81818" stroke-width="1.1" fill="none"/>
<path d="M258.5 628.5L1710 628.5" stroke="#c81818" stroke-width="1.1" fill="none"/>
<path d="M258.5 644.5L1710 644.5" stroke="#c81818" stroke-width="1.1" fill="none"/>
<path d="M258.5 660.5L1710 660.5" stroke="#c81818" stroke-width="1.1" fill="none"/>
<path d="M258.5 697.5L1710 697.5" stroke="#c81818" stroke-width="1.1" fill="none"/>
<path d="M1710.6 591.5L1710.6 697.2" stroke="#eee" stroke-width="1.3" fill="none"/>
<path d="M1714.3 591.5L1714.3 697.2" stroke="#eee" stroke-width="1.3" fill="none"/>
<rect x="1707" y="606" width="4" height="8" fill="#ddd"/>
<rect x="1707" y="633" width="4" height="8" fill="#ddd"/>
<rect x="1707" y="651" width="4" height="8" fill="#ddd"/>
<rect x="1707" y="677" width="4" height="8" fill="#ddd"/>
<circle cx="1721.6" cy="592.5" r="3.5" fill="#7a0606" stroke="#ff2424" stroke-width="1.2"/>
<circle cx="1721.6" cy="628.5" r="3.5" fill="#7a0606" stroke="#ff2424" stroke-width="1.2"/>
<circle cx="1721.6" cy="644.5" r="3.5" fill="#7a0606" stroke="#ff2424" stroke-width="1.2"/>
<circle cx="1721.6" cy="660.5" r="3.5" fill="#7a0606" stroke="#ff2424" stroke-width="1.2"/>
<circle cx="1721.6" cy="697.5" r="3.5" fill="#7a0606" stroke="#ff2424" stroke-width="1.2"/>
<path d="M258 727L1694 727" stroke="#f0f0f0" stroke-width="1.5" fill="none"/>
<path d="M258 731.5L1694 731.5" stroke="#f0f0f0" stroke-width="1.5" fill="none"/>
<rect x="278.0" y="724" width="7" height="2" fill="#ddd"/>
<rect x="303.5" y="724" width="7" height="2" fill="#ddd"/>
<rect x="338.0" y="724" width="7" height="2" fill="#ddd"/>
<rect x="382.5" y="724" width="7" height="2" fill="#ddd"/>
<rect x="428.5" y="724" width="7" height="2" fill="#ddd"/>
<rect x="477.0" y="724" width="7" height="2" fill="#ddd"/>
<rect x="526.0" y="724" width="7" height="2" fill="#ddd"/>
<rect x="575.0" y="724" width="7" height="2" fill="#ddd"/>
<rect x="624.0" y="724" width="7" height="2" fill="#ddd"/>
<rect x="673.0" y="724" width="7" height="2" fill="#ddd"/>
<rect x="722.0" y="724" width="7" height="2" fill="#ddd"/>
<rect x="771.0" y="724" width="7" height="2" fill="#ddd"/>
<rect x="819.5" y="724" width="7" height="2" fill="#ddd"/>
<rect x="868.0" y="724" width="7" height="2" fill="#ddd"/>
<rect x="917.0" y="724" width="7" height="2" fill="#ddd"/>
<rect x="963.5" y="724" width="7" height="2" fill="#ddd"/>
<rect x="999.5" y="724" width="7" height="2" fill="#ddd"/>
<rect x="1033.0" y="724" width="7" height="2" fill="#ddd"/>
<rect x="1073.5" y="724" width="7" height="2" fill="#ddd"/>
<rect x="1116.0" y="724" width="7" height="2" fill="#ddd"/>
<rect x="1161.0" y="724" width="7" height="2" fill="#ddd"/>
<rect x="1206.0" y="724" width="7" height="2" fill="#ddd"/>
<rect x="1250.5" y="724" width="7" height="2" fill="#ddd"/>
<rect x="1298.0" y="724" width="7" height="2" fill="#ddd"/>
<rect x="1344.5" y="724" width="7" height="2" fill="#ddd"/>
<rect x="1389.5" y="724" width="7" height="2" fill="#ddd"/>
<rect x="1430.0" y="724" width="7" height="2" fill="#ddd"/>
<rect x="1469.0" y="724" width="7" height="2" fill="#ddd"/>
<rect x="1511.5" y="724" width="7" height="2" fill="#ddd"/>
<rect x="1548.5" y="724" width="7" height="2" fill="#ddd"/>
<rect x="1582.5" y="724" width="7" height="2" fill="#ddd"/>
<rect x="1622.5" y="724" width="7" height="2" fill="#ddd"/>
<rect x="1667.0" y="724" width="7" height="2" fill="#ddd"/>
<path d="M268.5 727L268.5 735" stroke="#f0f0f0" stroke-width="1.2" fill="none"/>
<circle cx="268.5" cy="739" r="3.5" fill="#7a0606" stroke="#ff2424" stroke-width="1.2"/>
<path d="M295.5 727L295.5 735" stroke="#f0f0f0" stroke-width="1.2" fill="none"/>
<circle cx="295.5" cy="739" r="3.5" fill="#7a0606" stroke="#ff2424" stroke-width="1.2"/>
<path d="M319.5 727L319.5 735" stroke="#f0f0f0" stroke-width="1.2" fill="none"/>
<circle cx="319.5" cy="739" r="3.5" fill="#7a0606" stroke="#ff2424" stroke-width="1.2"/>
<path d="M364.5 727L364.5 735" stroke="#f0f0f0" stroke-width="1.2" fill="none"/>
<circle cx="364.5" cy="739" r="3.5" fill="#7a0606" stroke="#ff2424" stroke-width="1.2"/>
<path d="M408.5 727L408.5 735" stroke="#f0f0f0" stroke-width="1.2" fill="none"/>
<circle cx="408.5" cy="739" r="3.5" fill="#7a0606" stroke="#ff2424" stroke-width="1.2"/>
<path d="M456.5 727L456.5 735" stroke="#f0f0f0" stroke-width="1.2" fill="none"/>
<circle cx="456.5" cy="739" r="3.5" fill="#7a0606" stroke="#ff2424" stroke-width="1.2"/>
<path d="M505.5 727L505.5 735" stroke="#f0f0f0" stroke-width="1.2" fill="none"/>
<circle cx="505.5" cy="739" r="3.5" fill="#7a0606" stroke="#ff2424" stroke-width="1.2"/>
<path d="M554.5 727L554.5 735" stroke="#f0f0f0" stroke-width="1.2" fill="none"/>
<circle cx="554.5" cy="739" r="3.5" fill="#7a0606" stroke="#ff2424" stroke-width="1.2"/>
<path d="M603.5 727L603.5 735" stroke="#f0f0f0" stroke-width="1.2" fill="none"/>
<circle cx="603.5" cy="739" r="3.5" fill="#7a0606" stroke="#ff2424" stroke-width="1.2"/>
<path d="M652.5 727L652.5 735" stroke="#f0f0f0" stroke-width="1.2" fill="none"/>
<circle cx="652.5" cy="739" r="3.5" fill="#7a0606" stroke="#ff2424" stroke-width="1.2"/>
<path d="M701.5 727L701.5 735" stroke="#f0f0f0" stroke-width="1.2" fill="none"/>
<circle cx="701.5" cy="739" r="3.5" fill="#7a0606" stroke="#ff2424" stroke-width="1.2"/>
<path d="M750.5 727L750.5 735" stroke="#f0f0f0" stroke-width="1.2" fill="none"/>
<circle cx="750.5" cy="739" r="3.5" fill="#7a0606" stroke="#ff2424" stroke-width="1.2"/>
<path d="M799.5 727L799.5 735" stroke="#f0f0f0" stroke-width="1.2" fill="none"/>
<circle cx="799.5" cy="739" r="3.5" fill="#7a0606" stroke="#ff2424" stroke-width="1.2"/>
<path d="M847.5 727L847.5 735" stroke="#f0f0f0" stroke-width="1.2" fill="none"/>
<circle cx="847.5" cy="739" r="3.5" fill="#7a0606" stroke="#ff2424" stroke-width="1.2"/>
<path d="M896.5 727L896.5 735" stroke="#f0f0f0" stroke-width="1.2" fill="none"/>
<circle cx="896.5" cy="739" r="3.5" fill="#7a0606" stroke="#ff2424" stroke-width="1.2"/>
<path d="M945.5 727L945.5 735" stroke="#f0f0f0" stroke-width="1.2" fill="none"/>
<circle cx="945.5" cy="739" r="3.5" fill="#7a0606" stroke="#ff2424" stroke-width="1.2"/>
<path d="M989.5 727L989.5 735" stroke="#f0f0f0" stroke-width="1.2" fill="none"/>
<circle cx="989.5" cy="739" r="3.5" fill="#7a0606" stroke="#ff2424" stroke-width="1.2"/>
<path d="M1017.5 727L1017.5 735" stroke="#f0f0f0" stroke-width="1.2" fill="none"/>
<circle cx="1017.5" cy="739" r="3.5" fill="#7a0606" stroke="#ff2424" stroke-width="1.2"/>
<path d="M1056.5 727L1056.5 735" stroke="#f0f0f0" stroke-width="1.2" fill="none"/>
<circle cx="1056.5" cy="739" r="3.5" fill="#7a0606" stroke="#ff2424" stroke-width="1.2"/>
<path d="M1098.5 727L1098.5 735" stroke="#f0f0f0" stroke-width="1.2" fill="none"/>
<circle cx="1098.5" cy="739" r="3.5" fill="#7a0606" stroke="#ff2424" stroke-width="1.2"/>
<path d="M1141.5 727L1141.5 735" stroke="#f0f0f0" stroke-width="1.2" fill="none"/>
<circle cx="1141.5" cy="739" r="3.5" fill="#7a0606" stroke="#ff2424" stroke-width="1.2"/>
<path d="M1188.5 727L1188.5 735" stroke="#f0f0f0" stroke-width="1.2" fill="none"/>
<circle cx="1188.5" cy="739" r="3.5" fill="#7a0606" stroke="#ff2424" stroke-width="1.2"/>
<path d="M1231.5 727L1231.5 735" stroke="#f0f0f0" stroke-width="1.2" fill="none"/>
<circle cx="1231.5" cy="739" r="3.5" fill="#7a0606" stroke="#ff2424" stroke-width="1.2"/>
<path d="M1277.5 727L1277.5 735" stroke="#f0f0f0" stroke-width="1.2" fill="none"/>
<circle cx="1277.5" cy="739" r="3.5" fill="#7a0606" stroke="#ff2424" stroke-width="1.2"/>
<path d="M1326.5 727L1326.5 735" stroke="#f0f0f0" stroke-width="1.2" fill="none"/>
<circle cx="1326.5" cy="739" r="3.5" fill="#7a0606" stroke="#ff2424" stroke-width="1.2"/>
<path d="M1370.5 727L1370.5 735" stroke="#f0f0f0" stroke-width="1.2" fill="none"/>
<circle cx="1370.5" cy="739" r="3.5" fill="#7a0606" stroke="#ff2424" stroke-width="1.2"/>
<path d="M1416.5 727L1416.5 735" stroke="#f0f0f0" stroke-width="1.2" fill="none"/>
<circle cx="1416.5" cy="739" r="3.5" fill="#7a0606" stroke="#ff2424" stroke-width="1.2"/>
<path d="M1451.5 727L1451.5 735" stroke="#f0f0f0" stroke-width="1.2" fill="none"/>
<circle cx="1451.5" cy="739" r="3.5" fill="#7a0606" stroke="#ff2424" stroke-width="1.2"/>
<path d="M1494.5 727L1494.5 735" stroke="#f0f0f0" stroke-width="1.2" fill="none"/>
<circle cx="1494.5" cy="739" r="3.5" fill="#7a0606" stroke="#ff2424" stroke-width="1.2"/>
<path d="M1536.5 727L1536.5 735" stroke="#f0f0f0" stroke-width="1.2" fill="none"/>
<circle cx="1536.5" cy="739" r="3.5" fill="#7a0606" stroke="#ff2424" stroke-width="1.2"/>
<path d="M1568.5 727L1568.5 735" stroke="#f0f0f0" stroke-width="1.2" fill="none"/>
<circle cx="1568.5" cy="739" r="3.5" fill="#7a0606" stroke="#ff2424" stroke-width="1.2"/>
<path d="M1604.5 727L1604.5 735" stroke="#f0f0f0" stroke-width="1.2" fill="none"/>
<circle cx="1604.5" cy="739" r="3.5" fill="#7a0606" stroke="#ff2424" stroke-width="1.2"/>
<path d="M1648.5 727L1648.5 735" stroke="#f0f0f0" stroke-width="1.2" fill="none"/>
<circle cx="1648.5" cy="739" r="3.5" fill="#7a0606" stroke="#ff2424" stroke-width="1.2"/>
<path d="M1693.5 727L1693.5 735" stroke="#f0f0f0" stroke-width="1.2" fill="none"/>
<circle cx="1693.5" cy="739" r="3.5" fill="#7a0606" stroke="#ff2424" stroke-width="1.2"/>
<rect x="876" y="713.9" width="44.2" height="4.2" fill="#22c822" stroke="#33ee33" stroke-width="0.8"/>
<rect x="864.5" y="720" width="54.8" height="4" fill="#1414c8"/>
<rect x="887" y="722.3" width="32.7" height="3.5" fill="#5a1010" stroke="#f0a070" stroke-width="1"/>
<rect x="920.6" y="725" width="3.1" height="35.7" fill="#1414d0"/>
<rect x="872" y="736.4" width="51.7" height="3.1" fill="#1414d0"/>
<rect x="844.6" y="758" width="79.1" height="3.6" fill="#1414d0"/>
<rect x="935.2" y="729.3" width="9.8" height="2.3" fill="#f0f0f0"/>
<rect x="497.5" y="538.5" width="10" height="10" fill="none" stroke="#eee" stroke-width="1.4"/></svg>
<div class="a" style="left:239px;top:500px;width:1641px;height:1px;background:#9a9a9a"></div>
<div class="a" style="left:243px;top:504px;width:88px;height:34px;background:#3a3a3a"></div>
<div class="a" style="left:246px;top:507.5px;width:21.5px;height:23px;border-radius:5px;background:linear-gradient(#ffe27a,#e8a822);"></div>
<div class="a" style="left:273px;top:507.5px;width:21.5px;height:23px;border-radius:5px;background:linear-gradient(#ffffff,#d4d4d4);"></div>
<div class="a" style="left:301px;top:507.5px;width:21.5px;height:23px;border-radius:5px;background:linear-gradient(#ffffff,#d4d4d4);"></div>
<div class="t" style="left:246px;width:21.5px;text-align:center;top:512.5px;font-size:12.5px;font-weight:bold;color:#2a2000;letter-spacing:-0.6px">2D</div>
<div class="t" style="left:273px;width:21.5px;text-align:center;top:512.5px;font-size:12.5px;font-weight:bold;color:#3a3a3a;letter-spacing:-0.6px">3D</div>
<div class="t" style="left:301px;width:21.5px;text-align:center;top:512px;font-size:13.5px;font-weight:bold;color:#3a3a3a">C</div>
<!-- bottom white strip --><div class="a" style="left:0;top:902px;width:1880px;height:3px;background:#fff"></div>
</body></html>
